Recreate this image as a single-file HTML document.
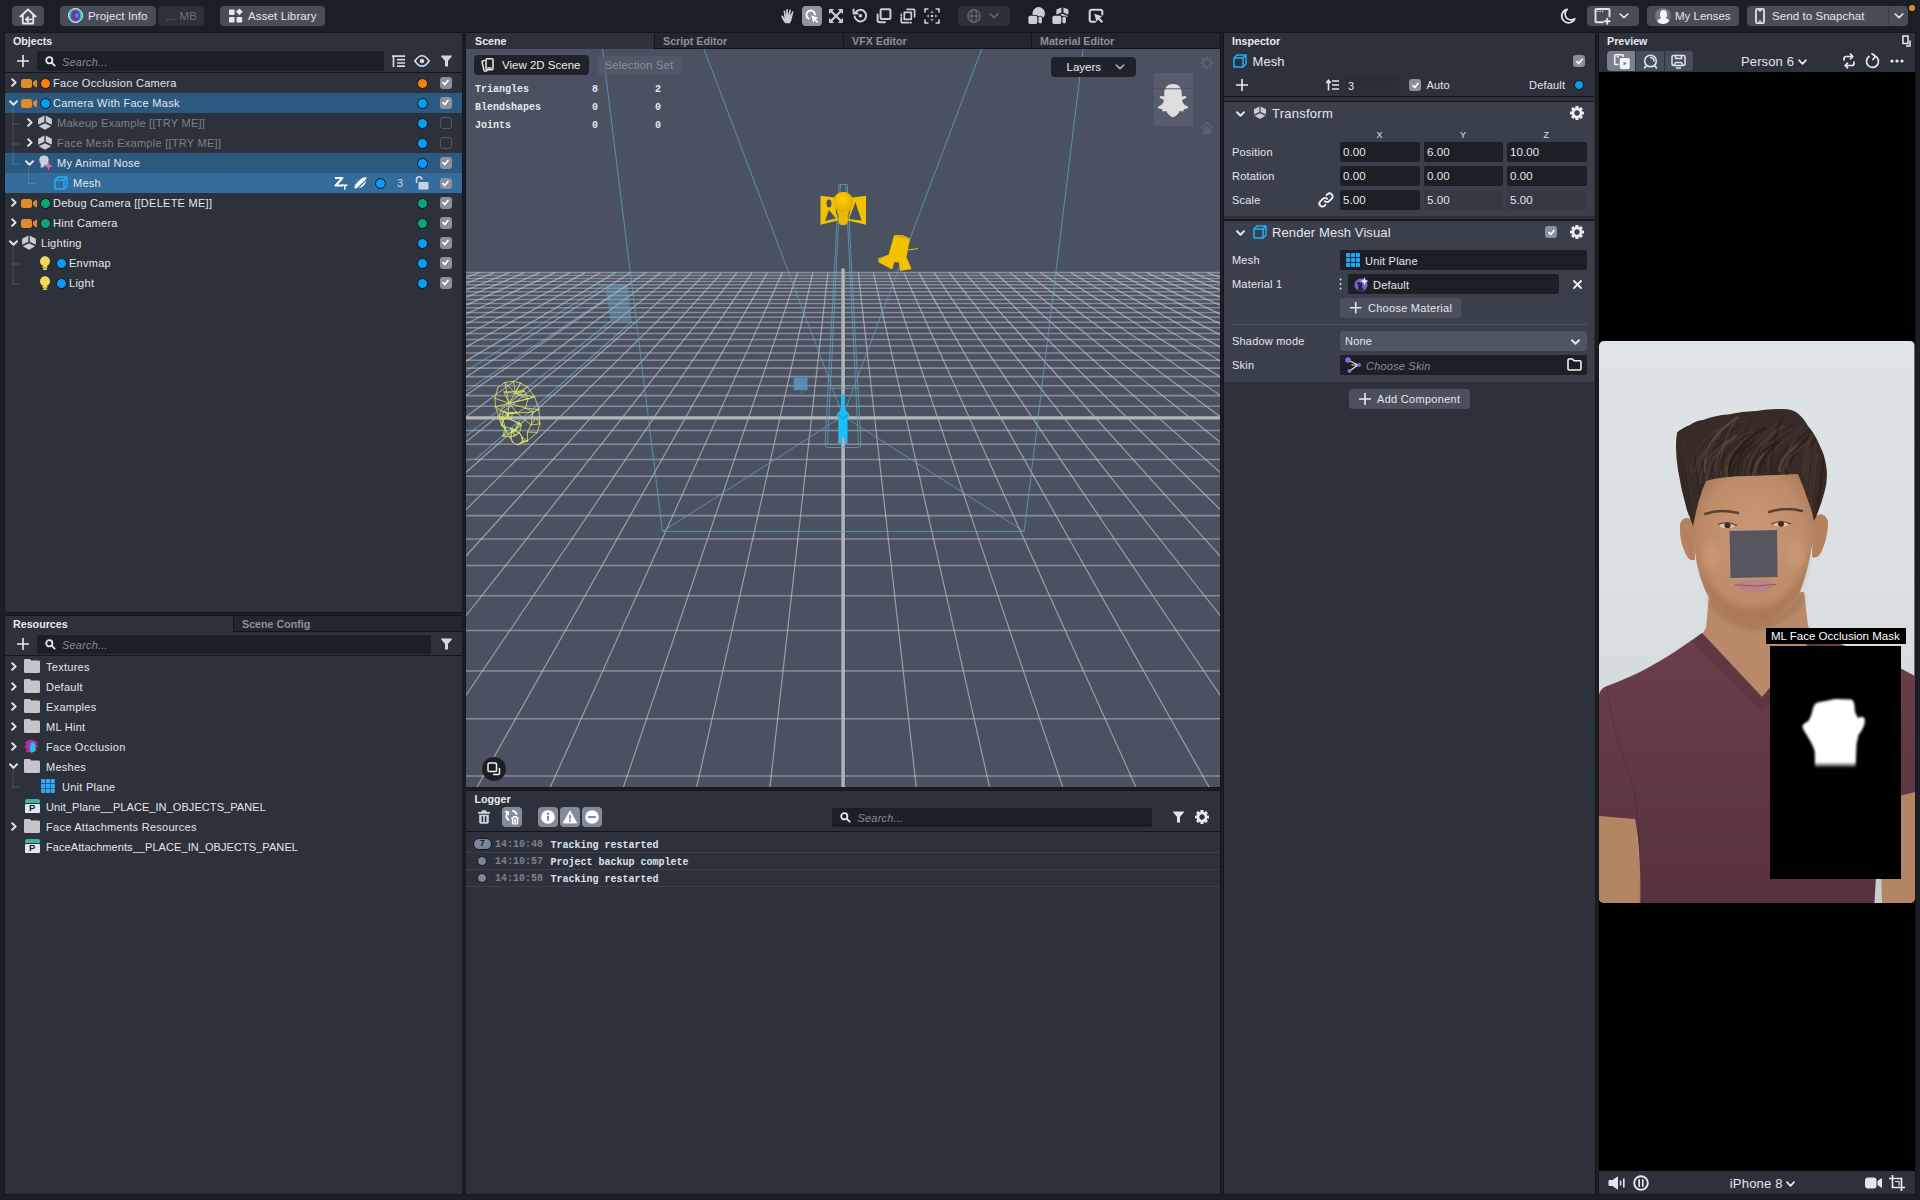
<!DOCTYPE html>
<html><head><meta charset="utf-8"><title>Lens Studio</title>
<style>
*{box-sizing:border-box;margin:0;padding:0}
html,body{width:1920px;height:1200px;overflow:hidden;background:#1b1e24;font-family:"Liberation Sans",sans-serif;font-size:11px;color:#e4e7ec;letter-spacing:.2px}
.abs{position:absolute}
.panel{position:absolute;background:#2d313b;border:1px solid #14161a}
.ptitle{position:absolute;font-weight:bold;font-size:10.700px;color:#e8eaee;letter-spacing:0;white-space:nowrap}
.tab{position:absolute;background:#23262e;border-left:1px solid #14161a;border-bottom:1px solid #14161a;color:#8b919c;font-weight:bold;font-size:10.700px;letter-spacing:0;padding-left:8px;padding-top:1px;line-height:15px;white-space:nowrap}
.btn{position:absolute;background:#474e5a;border-radius:4px;color:#e6e8ec;white-space:nowrap}
.t{position:absolute;white-space:nowrap;line-height:14px}
.dim{color:#7b818c}
.input{position:absolute;background:#1c1f26;border-radius:2px;color:#e4e7ec}
.row{position:absolute;left:0;width:456px;height:20px}
.sel1{background:#2c5980}
.sel2{background:#346c9b}
.dot{position:absolute;width:11px;height:11px;border-radius:50%;border:1px solid #14161a}
.blue{background:#0a9bf5}.orange{background:#f6820c}.green{background:#0fa478}
.cb{position:absolute;width:11.500px;height:11.500px;border-radius:3px;background:#8a919d}
.cb svg{position:absolute;left:1px;top:1px}
.cbo{position:absolute;width:11.500px;height:11.500px;border-radius:3px;border:1.500px solid #545a66}
svg{position:absolute;overflow:visible}
.mono{font-family:"Liberation Mono",monospace;letter-spacing:0}
.it{font-style:italic;color:#858b96}
</style></head><body>
<!-- TOOLBAR -->
<div class="btn" style="left:12px;top:6px;width:32px;height:20px"></div>
<svg style="left:19px;top:7.500px" width="18" height="17" viewBox="0 0 18 17" fill="none" stroke="#dfe5ec" stroke-width="1.900" stroke-linejoin="round" stroke-linecap="round"><path d="M1.500 8.500 9 1.500 16.500 8.500M3.800 7.500V15.500H14.200V7.500"/><path d="M12.200 11.300H7.200M9.200 9 6.900 11.300l2.300 2.300" stroke-width="1.700"/></svg>
<div class="btn" style="left:60px;top:6px;width:96px;height:20px"></div>
<div class="abs" style="left:68px;top:8px;width:15px;height:15px;border-radius:50%;background:#19c3c0;border:1px solid #e8f4f4"></div>
<div class="abs" style="left:71px;top:10px;width:9px;height:11px;border-radius:50% 50% 45% 45%;background:#8a2a96"></div>
<div class="abs" style="left:75px;top:13px;width:4px;height:5px;border-radius:50%;background:#1b9fd0"></div>
<div class="t" style="left:88px;top:9px;font-size:11.500px;letter-spacing:.12px">Project Info</div>
<div class="btn" style="left:158px;top:6px;width:46px;height:20px;background:#2d3139"></div>
<div class="t" style="left:166px;top:9px;font-size:11.5px;color:#6b717c;letter-spacing:.2px">... MB</div>
<div class="btn" style="left:220px;top:6px;width:105px;height:20px"></div>
<svg style="left:228px;top:8px" width="16" height="16" viewBox="0 0 16 16" fill="#e3e8ee"><rect x="1" y="1.5" width="5.6" height="5.6" rx=".8"/><rect x="1" y="9" width="5.6" height="5.6" rx=".8"/><rect x="8.6" y="9" width="5.6" height="5.6" rx=".8"/><path d="M11.4.4 14.8 3.8 11.4 7.2 8 3.8z"/></svg>
<div class="t" style="left:248px;top:9px;font-size:11.500px;letter-spacing:.12px">Asset Library</div>

<!-- center tools -->
<svg style="left:781px;top:8px" width="15" height="16" viewBox="0 0 15 16" fill="#c5d0dc"><path d="M4.2 15.2C2.6 13.4 1.3 11.2.4 8.6c-.3-.9.9-1.5 1.5-.6l1.6 2.3L2.6 3.2c-.1-1 1.2-1.2 1.4-.3l1 4.6L5.3 1.400c0-1 1.400-1 1.500 0l.4 5.900L8.400 1.900c.2-.9 1.500-.7 1.400.3L9.200 8l1.900-4.200c.4-.9 1.600-.4 1.300.5L10.800 10.200c-.3 2-.9 3.600-1.800 5z"/></svg>
<div class="abs" style="left:802px;top:6px;width:20px;height:20px;border-radius:4px;background:#8b95a3"></div>
<svg style="left:804px;top:8px" width="16" height="16" viewBox="0 0 16 16" fill="none"><path d="M4.6 10.500A4.300 4.300 0 1 1 11 6.300" stroke="#fff" stroke-width="1.900" stroke-linecap="round"/><path d="M7.200 7.200 14.300 9.900 11.700 11.300 14.400 14 13.300 15.100 10.600 12.400 9.300 14.800z" fill="#fff"/></svg>
<svg style="left:829px;top:9px" width="14" height="14" viewBox="0 0 14 14" fill="#c5d0dc"><path d="M0 0h5.200L0 5.200zM14 0v5.200L8.800 0zM0 14V8.800L5.200 14zM14 14H8.800L14 8.800z"/><path d="M2 2 12 12M12 2 2 12" stroke="#c5d0dc" stroke-width="2.100" fill="none"/></svg>
<svg style="left:853px;top:8px" width="15" height="15" viewBox="0 0 15 15" fill="none" stroke="#c5d0dc" stroke-width="2"><path d="M2.300 4.800A5.800 5.800 0 1 1 1.600 8.400" stroke-linecap="round"/><path d="M.6 1.500v4h4" fill="none" stroke-linejoin="round" stroke-linecap="round"/><circle cx="7.400" cy="7.700" r="1.800" fill="#c5d0dc" stroke="none"/></svg>
<svg style="left:876px;top:8px" width="16" height="16" viewBox="0 0 16 16" fill="none" stroke="#c5d0dc" stroke-width="2"><rect x="4.600" y="1.200" width="9.800" height="9.800" rx="1"/><path d="M1.600 6.500v5.500a2.300 2.300 0 0 0 2.300 2.300H9" stroke-linecap="round"/></svg>
<svg style="left:900px;top:8px" width="16" height="16" viewBox="0 0 16 16" fill="none" stroke="#c5d0dc" stroke-width="1.700" stroke-linecap="round" stroke-linejoin="round"><rect x="4.300" y="4.300" width="7" height="7"/><path d="M7 1.300h6.600a1 1 0 0 1 1 1V8.800M1.300 9.500v4.200a1 1 0 0 0 1 1H8.800M1.300 7.700V6.300M11 14.700h-.4"/></svg>
<svg style="left:924px;top:8px" width="16" height="16" viewBox="0 0 16 16" fill="none" stroke="#c5d0dc" stroke-width="1.700"><path d="M1 4.500V1h3.500M11.500 1H15v3.500M15 11.500V15h-3.500M4.500 15H1v-3.500"/><circle cx="8" cy="8" r="1.300" fill="#c5d0dc" stroke="none"/><path d="M8 2.500 9.800 5H6.200zM8 13.500 9.800 11H6.200zM2.500 8 5 6.200v3.600zM13.500 8 11 6.200v3.600z" fill="#8f9aa8" stroke="none"/></svg>
<div class="abs" style="left:958px;top:6px;width:52px;height:20px;border-radius:4px;background:#2c3038"></div>
<svg style="left:967px;top:9px" width="14" height="14" viewBox="0 0 14 14" fill="none" stroke="#5f6672" stroke-width="1.400"><circle cx="7" cy="7" r="6.200"/><ellipse cx="7" cy="7" rx="2.600" ry="6.200"/><path d="M.8 7h12.400"/></svg>
<svg style="left:989px;top:13px" width="10" height="6" viewBox="0 0 10 6" fill="none" stroke="#5f6672" stroke-width="1.700" stroke-linecap="round" stroke-linejoin="round"><path d="M1.200 1 5 4.600 8.800 1"/></svg>
<svg style="left:1027.500px;top:7px" width="17" height="17" viewBox="0 0 17 17" fill="#c5d0dc"><circle cx="10.700" cy="6.300" r="6.200"/><rect x="-.3" y="8" width="10.500" height="9.500" rx="2" fill="#1b1e24"/><rect x="9.600" y="8.700" width="5.200" height="9" rx="2.600" fill="#1b1e24"/><rect x=".4" y="8.800" width="8.900" height="8.100" rx="1.700"/><rect x="10.500" y="9.600" width="3.400" height="6.900" rx="1.700"/></svg>
<svg style="left:1051.500px;top:7px" width="17" height="17" viewBox="0 0 17 17" fill="#c5d0dc"><path d="M9.400.4 4.400 2.600V7.800L9.400 5.600zM11.400.4l5 2.200V7.800L11.400 5.600zM10.400 6.700 16.200 9.300 14 10.200 10.400 8.700 8.600 9.400V7.500z"/><rect x="-.3" y="8" width="10.500" height="9.500" rx="2" fill="#1b1e24"/><rect x="9.600" y="8.700" width="5.200" height="9" rx="2.600" fill="#1b1e24"/><rect x=".4" y="8.800" width="8.900" height="8.100" rx="1.700"/><rect x="10.500" y="9.600" width="3.400" height="6.900" rx="1.700"/></svg>
<svg style="left:1088px;top:8px" width="17" height="16" viewBox="0 0 17 16" fill="none"><path d="M7 13.800H3.700a2 2 0 0 1-2-2V3.700a2 2 0 0 1 2-2h8.600a2 2 0 0 1 2 2V6.500" stroke="#cdd7e2" stroke-width="2.100" stroke-linecap="round"/><path d="M6.200 5.700 14.200 8.300 11.700 10 15.200 13.500 13.600 15.100 10.100 11.600 8.600 14z" fill="#cdd7e2"/></svg>

<!-- right side -->
<svg style="left:1561px;top:8px" width="15" height="16" viewBox="0 0 15 16" fill="none" stroke="#dfe5ec" stroke-width="1.700" stroke-linejoin="round"><path d="M6.300 1.300A6.800 6.800 0 1 0 13.800 10.600 5.800 5.800 0 0 1 6.300 1.300z"/></svg>
<div class="btn" style="left:1587px;top:6px;width:52px;height:20px"></div>
<svg style="left:1594px;top:8px" width="18" height="16" viewBox="0 0 18 16" fill="none" stroke="#dfe5ec" stroke-width="1.900" stroke-linecap="round"><path d="M9 14.300H2.500a1 1 0 0 1-1-1V2a1 1 0 0 1 1-1H14.500a1 1 0 0 1 1 1v6.500"/><path d="M3.800 3.300h.01M6.200 3.300h.01M8.600 3.300h.01" stroke-width="1.500"/><path d="M13.200 10.800v5M10.700 13.300h5"/></svg>
<svg style="left:1619px;top:13px" width="10" height="6" viewBox="0 0 10 6" fill="none" stroke="#dfe5ec" stroke-width="1.700" stroke-linecap="round" stroke-linejoin="round"><path d="M1.200 1 5 4.600 8.800 1"/></svg>
<div class="btn" style="left:1647px;top:6px;width:92px;height:20px"></div>
<div class="abs" style="left:1655px;top:8px;width:16px;height:16px;border-radius:50%;background:#6f7682;overflow:hidden"><div class="abs" style="left:4.500px;top:2px;width:7px;height:8.500px;border-radius:50%;background:#f2f4f6"></div><div class="abs" style="left:1.500px;top:10px;width:13px;height:9px;border-radius:50% 50% 0 0;background:#f2f4f6"></div></div>
<div class="t" style="left:1675px;top:9px;font-size:11.500px;letter-spacing:0">My Lenses</div>
<div class="btn" style="left:1747px;top:6px;width:161px;height:20px"></div>
<div class="abs" style="left:1888px;top:6px;width:1px;height:20px;background:#3a404a"></div>
<svg style="left:1755px;top:8px" width="10" height="16" viewBox="0 0 10 16" fill="none" stroke="#dfe5ec" stroke-width="1.800"><rect x="1" y=".8" width="8" height="14.400" rx="1.400"/><path d="M3.500 2.600h3M4 13.200h2" stroke-linecap="round" stroke-width="1.200"/></svg>
<div class="t" style="left:1772px;top:9px;font-size:11.500px;letter-spacing:.07px">Send to Snapchat</div>
<svg style="left:1894px;top:13px" width="10" height="6" viewBox="0 0 10 6" fill="none" stroke="#dfe5ec" stroke-width="1.700" stroke-linecap="round" stroke-linejoin="round"><path d="M1.200 1 5 4.600 8.800 1"/></svg>
<div class="abs" style="left:1909px;top:5px;width:6px;height:6px;border-radius:50%;background:#e08d25"></div>
<div class="panel" style="left:4px;top:32px;width:459px;height:581px">
<div class="ptitle" style="left:8px;top:2px">Objects</div>
<svg style="left:12px;top:22px" width="12" height="12" viewBox="0 0 12 12" fill="none" stroke="#e8ebef" stroke-width="1.600"><path d="M6 0v12M0 6h12"/></svg>
<div class="input" style="left:32px;top:18px;width:347px;height:20px"></div>
<svg style="left:40px;top:23px" width="11" height="11" viewBox="0 0 11 11" fill="none" stroke="#e4e7ec" stroke-width="1.800" stroke-linecap="round"><circle cx="4.300" cy="4.300" r="3.100"/><path d="M6.800 6.800 9.700 9.700"/></svg>
<div class="t it" style="left:57px;top:21.500px;font-size:11px">Search...</div>
<svg style="left:387px;top:22px" width="13" height="12" viewBox="0 0 13 12" fill="none" stroke="#cfd9e4" stroke-width="1.700"><path d="M0 1.200h13M5 4.700h8M5 8h8M5 11.200h8M1.500 1.200v10.800"/></svg>
<svg style="left:409px;top:22px" width="16" height="12" viewBox="0 0 16 12" fill="none" stroke="#cfd9e4" stroke-width="1.700"><path d="M.9 6Q8-4.500 15.100 6 8 16.500.9 6z"/><circle cx="8" cy="6" r="2.300" fill="#cfd9e4" stroke="none"/></svg>
<svg style="left:435.5px;top:22px" width="11" height="12" viewBox="0 0 11 12" fill="#cfd9e4"><path d="M.3.500h10.400q.5.300 0 1L7 6v5.500H4V6L.3 1.500q-.5-.700 0-1z"/></svg>
<div class="abs" style="left:0;top:39px;width:457px;height:1px;background:#14161a"></div>
<div class="row sel1" style="top:60px;width:457px"></div>
<div class="row sel1" style="top:120px;width:457px"></div>
<div class="row sel2" style="top:140px;width:457px"></div>
<div class="abs" style="left:7px;top:75px;width:1.500px;height:56px;background:rgba(255,255,255,.075)"></div>
<div class="abs" style="left:7px;top:90px;width:8px;height:1.500px;background:rgba(255,255,255,.075)"></div>
<div class="abs" style="left:7px;top:110px;width:8px;height:1.500px;background:rgba(255,255,255,.075)"></div>
<div class="abs" style="left:7px;top:130px;width:8px;height:1.500px;background:rgba(255,255,255,.075)"></div>
<div class="abs" style="left:23px;top:134px;width:1px;height:17px;background:rgba(255,255,255,.13)"></div>
<div class="abs" style="left:23px;top:150px;width:8px;height:1px;background:rgba(255,255,255,.13)"></div>
<div class="abs" style="left:7px;top:213px;width:1.500px;height:38px;background:rgba(255,255,255,.075)"></div>
<div class="abs" style="left:7px;top:230px;width:8px;height:1.500px;background:rgba(255,255,255,.075)"></div>
<div class="abs" style="left:7px;top:250px;width:8px;height:1.500px;background:rgba(255,255,255,.075)"></div>
<svg style="left:5.5px;top:44.7px" width="6" height="9" viewBox="0 0 6 9" fill="none" stroke="#dfe3e8" stroke-width="2" stroke-linecap="round" stroke-linejoin="round"><path d="M1.200 1.200 4.600 4.500 1.200 7.800"/></svg>
<div class="abs" style="left:16px;top:45.5px;width:10.500px;height:9px;border-radius:2.500px;background:#e08a2d"></div><svg style="left:27.5px;top:45.5px" width="4" height="9" viewBox="0 0 4 9"><path d="M0 3 3 .8q1-.5 1 .5v6.400q0 1-1 .5L0 6z" fill="#e08a2d"/></svg>
<div class="dot orange" style="left:35px;top:45px"></div>
<div class="t " style="left:48px;top:43px;font-size:11px;letter-spacing:.27px">Face Occlusion Camera</div>
<div class="dot orange" style="left:411.5px;top:44.5px"></div><div class="cb" style="left:435px;top:44.3px"><svg width="9" height="9" viewBox="0 0 9 9" fill="none" stroke="#fff" stroke-width="1.700" stroke-linecap="round" stroke-linejoin="round"><path d="M2 4.700 3.800 6.500 7 2.500"/></svg></div>
<svg style="left:3.8px;top:67px" width="9" height="6" viewBox="0 0 9 6" fill="none" stroke="#dfe3e8" stroke-width="2" stroke-linecap="round" stroke-linejoin="round"><path d="M1 1.200 4.500 4.800 8 1.200"/></svg>
<div class="abs" style="left:16px;top:65.5px;width:10.500px;height:9px;border-radius:2.500px;background:#e08a2d"></div><svg style="left:27.5px;top:65.5px" width="4" height="9" viewBox="0 0 4 9"><path d="M0 3 3 .8q1-.5 1 .5v6.400q0 1-1 .5L0 6z" fill="#e08a2d"/></svg>
<div class="dot blue" style="left:35px;top:65px"></div>
<div class="t " style="left:48px;top:63px;font-size:11px;letter-spacing:.27px">Camera With Face Mask</div>
<div class="dot blue" style="left:411.5px;top:64.5px"></div><div class="cb" style="left:435px;top:64.3px"><svg width="9" height="9" viewBox="0 0 9 9" fill="none" stroke="#fff" stroke-width="1.700" stroke-linecap="round" stroke-linejoin="round"><path d="M2 4.700 3.800 6.500 7 2.500"/></svg></div>
<svg style="left:21.5px;top:84.7px" width="6" height="9" viewBox="0 0 6 9" fill="none" stroke="#dfe3e8" stroke-width="2" stroke-linecap="round" stroke-linejoin="round"><path d="M1.200 1.200 4.600 4.500 1.200 7.800"/></svg>
<svg style="left:32px;top:82.2px" width="16" height="16" viewBox="0 0 14 14" fill="#c9cdd3"><path d="M6.400.5 6.400 6 1 8.600V3.300zM7.600.5 13 3.300v5.300L7.600 6zM7 7.200l5.400 2.600L7 12.900 1.600 9.800z"/></svg>
<div class="t dim" style="left:52px;top:83px;font-size:11px;letter-spacing:.27px">Makeup Example [[TRY ME]]</div>
<div class="dot blue" style="left:411.5px;top:84.5px"></div><div class="cbo" style="left:435px;top:84.3px"></div>
<svg style="left:21.5px;top:104.7px" width="6" height="9" viewBox="0 0 6 9" fill="none" stroke="#dfe3e8" stroke-width="2" stroke-linecap="round" stroke-linejoin="round"><path d="M1.200 1.200 4.600 4.500 1.200 7.800"/></svg>
<svg style="left:32px;top:102.2px" width="16" height="16" viewBox="0 0 14 14" fill="#c9cdd3"><path d="M6.400.5 6.400 6 1 8.600V3.300zM7.600.5 13 3.300v5.300L7.600 6zM7 7.200l5.400 2.600L7 12.900 1.600 9.800z"/></svg>
<div class="t dim" style="left:52px;top:103px;font-size:11px;letter-spacing:.27px">Face Mesh Example [[TRY ME]]</div>
<div class="dot blue" style="left:411.5px;top:104.5px"></div><div class="cbo" style="left:435px;top:104.3px"></div>
<svg style="left:19.8px;top:127px" width="9" height="6" viewBox="0 0 9 6" fill="none" stroke="#dfe3e8" stroke-width="2" stroke-linecap="round" stroke-linejoin="round"><path d="M1 1.200 4.500 4.800 8 1.200"/></svg>
<svg style="left:33px;top:122px" width="16" height="16" viewBox="0 0 16 16"><path d="M2.500 1.500Q6-.5 9.500 1.500 11 3.500 10.500 6l-.5 3Q8 11 6 10.500L5.500 12.500H2.500Q3.500 9 1.500 7 .3 4 2.500 1.500z" fill="#c6d0dc"/><path d="M10.500 6.500 11.700 9.800 15 11 11.700 12.200 10.500 15.500 9.300 12.200 6 11 9.300 9.800z" fill="#e466a8"/></svg>
<div class="t " style="left:52px;top:123px;font-size:11px;letter-spacing:.27px">My Animal Nose</div>
<div class="dot blue" style="left:411.5px;top:124.5px"></div><div class="cb" style="left:435px;top:124.3px"><svg width="9" height="9" viewBox="0 0 9 9" fill="none" stroke="#fff" stroke-width="1.700" stroke-linecap="round" stroke-linejoin="round"><path d="M2 4.700 3.800 6.500 7 2.500"/></svg></div>
<svg style="left:49px;top:143px" width="14" height="14" viewBox="0 0 14 14" fill="none" stroke="#1eb0f5" stroke-width="1.500" stroke-linejoin="round"><rect x="1" y="4" width="9" height="9"/><path d="M1 4 4 1h9v9l-3 3M10 4l3-3"/></svg>
<div class="t " style="left:68px;top:143px;font-size:11px;letter-spacing:.27px">Mesh</div>
<svg style="left:329px;top:144px" width="14" height="13" viewBox="0 0 14 13" fill="none" stroke="#fff" stroke-width="1.900" stroke-linejoin="round"><path d="M1 1h7.500L1.500 8.500H9"/><path d="M8 8.200h5.500M10.800 8.200v4.600" stroke-width="1.500"/></svg>
<svg style="left:349px;top:144px" width="13" height="12" viewBox="0 0 13 12"><path d="M.5 11.500Q.5 1 12.500.3 12.800 11.500 .5 11.500z" fill="#fff"/><path d="M0 8 8.500 -.5M2.500 12.500 13.500 1.500" stroke="#346c9b" stroke-width="1.100"/></svg>
<div class="dot blue" style="left:370px;top:145px"></div>
<div class="t" style="left:392px;top:142.5px;font-size:11px;color:#c9d3de">3</div>
<svg style="left:410px;top:142px" width="14" height="15" viewBox="0 0 14 15"><path d="M1.500 7.500V4.200A2.700 2.700 0 0 1 6.800 4" fill="none" stroke="#c6d2df" stroke-width="1.600" stroke-linecap="round"/><rect x="3.500" y="7" width="10" height="7.500" rx="1.200" fill="#c6d2df"/></svg>
<div class="cb" style="left:435px;top:144.5px"><svg width="9" height="9" viewBox="0 0 9 9" fill="none" stroke="#fff" stroke-width="1.700" stroke-linecap="round" stroke-linejoin="round"><path d="M2 4.700 3.800 6.500 7 2.500"/></svg></div>
<svg style="left:5.5px;top:164.7px" width="6" height="9" viewBox="0 0 6 9" fill="none" stroke="#dfe3e8" stroke-width="2" stroke-linecap="round" stroke-linejoin="round"><path d="M1.200 1.200 4.600 4.500 1.200 7.800"/></svg>
<div class="abs" style="left:16px;top:165.5px;width:10.500px;height:9px;border-radius:2.500px;background:#e08a2d"></div><svg style="left:27.5px;top:165.5px" width="4" height="9" viewBox="0 0 4 9"><path d="M0 3 3 .8q1-.5 1 .5v6.400q0 1-1 .5L0 6z" fill="#e08a2d"/></svg>
<div class="dot green" style="left:35px;top:165px"></div>
<div class="t " style="left:48px;top:163px;font-size:11px;letter-spacing:.27px">Debug Camera [[DELETE ME]]</div>
<div class="dot green" style="left:411.5px;top:164.5px"></div><div class="cb" style="left:435px;top:164.3px"><svg width="9" height="9" viewBox="0 0 9 9" fill="none" stroke="#fff" stroke-width="1.700" stroke-linecap="round" stroke-linejoin="round"><path d="M2 4.700 3.800 6.500 7 2.500"/></svg></div>
<svg style="left:5.5px;top:184.7px" width="6" height="9" viewBox="0 0 6 9" fill="none" stroke="#dfe3e8" stroke-width="2" stroke-linecap="round" stroke-linejoin="round"><path d="M1.200 1.200 4.600 4.500 1.200 7.800"/></svg>
<div class="abs" style="left:16px;top:185.5px;width:10.500px;height:9px;border-radius:2.500px;background:#e08a2d"></div><svg style="left:27.5px;top:185.5px" width="4" height="9" viewBox="0 0 4 9"><path d="M0 3 3 .8q1-.5 1 .5v6.400q0 1-1 .5L0 6z" fill="#e08a2d"/></svg>
<div class="dot green" style="left:35px;top:185px"></div>
<div class="t " style="left:48px;top:183px;font-size:11px;letter-spacing:.27px">Hint Camera</div>
<div class="dot green" style="left:411.5px;top:184.5px"></div><div class="cb" style="left:435px;top:184.3px"><svg width="9" height="9" viewBox="0 0 9 9" fill="none" stroke="#fff" stroke-width="1.700" stroke-linecap="round" stroke-linejoin="round"><path d="M2 4.700 3.800 6.500 7 2.500"/></svg></div>
<svg style="left:3.8px;top:207px" width="9" height="6" viewBox="0 0 9 6" fill="none" stroke="#dfe3e8" stroke-width="2" stroke-linecap="round" stroke-linejoin="round"><path d="M1 1.200 4.500 4.800 8 1.200"/></svg>
<svg style="left:16px;top:202.2px" width="16" height="16" viewBox="0 0 14 14" fill="#c9cdd3"><path d="M6.400.5 6.400 6 1 8.600V3.300zM7.600.5 13 3.300v5.300L7.600 6zM7 7.200l5.400 2.600L7 12.900 1.600 9.800z"/></svg>
<div class="t " style="left:36px;top:203px;font-size:11px;letter-spacing:.27px">Lighting</div>
<div class="dot blue" style="left:411.5px;top:204.5px"></div><div class="cb" style="left:435px;top:204.3px"><svg width="9" height="9" viewBox="0 0 9 9" fill="none" stroke="#fff" stroke-width="1.700" stroke-linecap="round" stroke-linejoin="round"><path d="M2 4.700 3.800 6.500 7 2.500"/></svg></div>
<svg style="left:33.5px;top:222.5px" width="12" height="15" viewBox="0 0 12 15"><circle cx="6" cy="5.300" r="5" fill="#f1da55"/><rect x="3.600" y="9.500" width="4.800" height="2.300" fill="#f1da55"/><rect x="4" y="12.300" width="4" height="1.800" rx=".8" fill="#f1da55"/></svg>
<div class="dot blue" style="left:51px;top:225px"></div>
<div class="t " style="left:64px;top:223px;font-size:11px;letter-spacing:.27px">Envmap</div>
<div class="dot blue" style="left:411.5px;top:224.5px"></div><div class="cb" style="left:435px;top:224.3px"><svg width="9" height="9" viewBox="0 0 9 9" fill="none" stroke="#fff" stroke-width="1.700" stroke-linecap="round" stroke-linejoin="round"><path d="M2 4.700 3.800 6.500 7 2.500"/></svg></div>
<svg style="left:33.5px;top:242.5px" width="12" height="15" viewBox="0 0 12 15"><circle cx="6" cy="5.300" r="5" fill="#f1da55"/><rect x="3.600" y="9.500" width="4.800" height="2.300" fill="#f1da55"/><rect x="4" y="12.300" width="4" height="1.800" rx=".8" fill="#f1da55"/></svg>
<div class="dot blue" style="left:51px;top:245px"></div>
<div class="t " style="left:64px;top:243px;font-size:11px;letter-spacing:.27px">Light</div>
<div class="dot blue" style="left:411.5px;top:244.5px"></div><div class="cb" style="left:435px;top:244.3px"><svg width="9" height="9" viewBox="0 0 9 9" fill="none" stroke="#fff" stroke-width="1.700" stroke-linecap="round" stroke-linejoin="round"><path d="M2 4.700 3.800 6.500 7 2.500"/></svg></div>
</div>
<div class="panel" style="left:4px;top:615px;width:459px;height:580px">
<div class="ptitle" style="left:8px;top:2px">Resources</div>
<div class="tab" style="left:228px;top:0;width:229px;height:16px">Scene Config</div>
<svg style="left:12px;top:22px" width="12" height="12" viewBox="0 0 12 12" fill="none" stroke="#e8ebef" stroke-width="1.600"><path d="M6 0v12M0 6h12"/></svg>
<div class="input" style="left:32px;top:18.500px;width:394px;height:19.500px"></div>
<svg style="left:40px;top:23px" width="11" height="11" viewBox="0 0 11 11" fill="none" stroke="#e4e7ec" stroke-width="1.800" stroke-linecap="round"><circle cx="4.300" cy="4.300" r="3.100"/><path d="M6.800 6.800 9.700 9.700"/></svg>
<div class="t it" style="left:57px;top:21.500px;font-size:11px">Search...</div>
<svg style="left:435.5px;top:22px" width="11" height="12" viewBox="0 0 11 12" fill="#cfd9e4"><path d="M.3.500h10.400q.5.300 0 1L7 6v5.500H4V6L.3 1.500q-.5-.700 0-1z"/></svg>
<div class="abs" style="left:0;top:38.500px;width:457px;height:1px;background:#14161a"></div>
<svg style="left:5.5px;top:45.7px" width="6" height="9" viewBox="0 0 6 9" fill="none" stroke="#dfe3e8" stroke-width="2" stroke-linecap="round" stroke-linejoin="round"><path d="M1.200 1.200 4.600 4.500 1.200 7.800"/></svg>
<svg style="left:19px;top:43.3px" width="16" height="14" viewBox="0 0 16 14" fill="#c3c5ca"><path d="M1.300 0h4.500l1.500 1.600H14.700A1.300 1.300 0 0 1 16 2.900V12.700A1.300 1.300 0 0 1 14.700 14H1.300A1.300 1.300 0 0 1 0 12.700V1.300A1.300 1.300 0 0 1 1.300 0z"/></svg>
<div class="t" style="left:41px;top:44px;font-size:11px;letter-spacing:.27px">Textures</div>
<svg style="left:5.5px;top:65.7px" width="6" height="9" viewBox="0 0 6 9" fill="none" stroke="#dfe3e8" stroke-width="2" stroke-linecap="round" stroke-linejoin="round"><path d="M1.200 1.200 4.600 4.500 1.200 7.800"/></svg>
<svg style="left:19px;top:63.3px" width="16" height="14" viewBox="0 0 16 14" fill="#c3c5ca"><path d="M1.300 0h4.500l1.500 1.600H14.700A1.300 1.300 0 0 1 16 2.900V12.700A1.300 1.300 0 0 1 14.700 14H1.300A1.300 1.300 0 0 1 0 12.700V1.300A1.300 1.300 0 0 1 1.300 0z"/></svg>
<div class="t" style="left:41px;top:64px;font-size:11px;letter-spacing:.27px">Default</div>
<svg style="left:5.5px;top:85.7px" width="6" height="9" viewBox="0 0 6 9" fill="none" stroke="#dfe3e8" stroke-width="2" stroke-linecap="round" stroke-linejoin="round"><path d="M1.200 1.200 4.600 4.500 1.200 7.800"/></svg>
<svg style="left:19px;top:83.3px" width="16" height="14" viewBox="0 0 16 14" fill="#c3c5ca"><path d="M1.300 0h4.500l1.500 1.600H14.700A1.300 1.300 0 0 1 16 2.900V12.700A1.300 1.300 0 0 1 14.700 14H1.300A1.300 1.300 0 0 1 0 12.700V1.300A1.300 1.300 0 0 1 1.300 0z"/></svg>
<div class="t" style="left:41px;top:84px;font-size:11px;letter-spacing:.27px">Examples</div>
<svg style="left:5.5px;top:105.7px" width="6" height="9" viewBox="0 0 6 9" fill="none" stroke="#dfe3e8" stroke-width="2" stroke-linecap="round" stroke-linejoin="round"><path d="M1.200 1.200 4.600 4.500 1.200 7.800"/></svg>
<svg style="left:19px;top:103.3px" width="16" height="14" viewBox="0 0 16 14" fill="#c3c5ca"><path d="M1.300 0h4.500l1.500 1.600H14.700A1.300 1.300 0 0 1 16 2.900V12.700A1.300 1.300 0 0 1 14.700 14H1.300A1.300 1.300 0 0 1 0 12.700V1.300A1.300 1.300 0 0 1 1.300 0z"/></svg>
<div class="t" style="left:41px;top:104px;font-size:11px;letter-spacing:.27px">ML Hint</div>
<svg style="left:5.5px;top:125.7px" width="6" height="9" viewBox="0 0 6 9" fill="none" stroke="#dfe3e8" stroke-width="2" stroke-linecap="round" stroke-linejoin="round"><path d="M1.200 1.200 4.600 4.500 1.200 7.800"/></svg>
<svg style="left:19px;top:123px" width="16" height="16" viewBox="0 0 16 16"><path d="M3 2Q7-.5 11 2l2.500 1-1 2.500 1.500 2-2 1.500.5 3-3 .5L8 15 5.500 13 2 13.500 2.500 10 .3 8 2 6 1 3z" fill="#b0309c"/><path d="M6 13V8.500L4.800 7.200q.2-1 1.200-.3L6.600 7.500V4q.6-1 1.200 0V6.500 3.200q.6-1 1.200 0V6.500 3.800q.6-1 1.200 0V7 5q.6-.8 1.100 0v5.500q0 2-1.500 2.500z" fill="#1bc5e8"/></svg>
<div class="t" style="left:41px;top:124px;font-size:11px;letter-spacing:.27px">Face Occlusion</div>
<svg style="left:3.8px;top:147.3px" width="9" height="6" viewBox="0 0 9 6" fill="none" stroke="#dfe3e8" stroke-width="2" stroke-linecap="round" stroke-linejoin="round"><path d="M1 1.200 4.500 4.800 8 1.200"/></svg>
<svg style="left:19px;top:143.3px" width="16" height="14" viewBox="0 0 16 14" fill="#c3c5ca"><path d="M1.300 0h4.500l1.500 1.600H14.700A1.300 1.300 0 0 1 16 2.900V12.700A1.300 1.300 0 0 1 14.700 14H1.300A1.300 1.300 0 0 1 0 12.700V1.300A1.300 1.300 0 0 1 1.300 0z"/></svg>
<div class="t" style="left:41px;top:144px;font-size:11px;letter-spacing:.27px">Meshes</div>
<svg style="left:35.5px;top:163.2px" width="14" height="14" viewBox="0 0 14 14" fill="#2da8f2"><rect x="0.0" y="0.0" width="4.300" height="4.300" rx=".9"/><rect x="0.0" y="4.8" width="4.300" height="4.300" rx=".9"/><rect x="0.0" y="9.6" width="4.300" height="4.300" rx=".9"/><rect x="4.8" y="0.0" width="4.300" height="4.300" rx=".9"/><rect x="4.8" y="4.8" width="4.300" height="4.300" rx=".9"/><rect x="4.8" y="9.6" width="4.300" height="4.300" rx=".9"/><rect x="9.6" y="0.0" width="4.300" height="4.300" rx=".9"/><rect x="9.6" y="4.8" width="4.300" height="4.300" rx=".9"/><rect x="9.6" y="9.6" width="4.300" height="4.300" rx=".9"/></svg>
<div class="t" style="left:57px;top:164px;font-size:11px;letter-spacing:.27px">Unit Plane</div>
<div class="abs" style="left:19.5px;top:183px;width:15px;height:4px;border-radius:2px 2px 0 0;background:#3db5a0"></div><div class="abs" style="left:19.5px;top:188px;width:15px;height:9px;border-radius:1px;background:#e3e7ec"></div><div class="abs" style="left:24.0px;top:187.2px;font-size:9.500px;font-weight:bold;color:#1b1e24;line-height:10px;letter-spacing:0">P</div>
<div class="t" style="left:41px;top:184px;font-size:11px;letter-spacing:.07px">Unit_Plane__PLACE_IN_OBJECTS_PANEL</div>
<svg style="left:5.5px;top:205.7px" width="6" height="9" viewBox="0 0 6 9" fill="none" stroke="#dfe3e8" stroke-width="2" stroke-linecap="round" stroke-linejoin="round"><path d="M1.200 1.200 4.600 4.500 1.200 7.800"/></svg>
<svg style="left:19px;top:203.3px" width="16" height="14" viewBox="0 0 16 14" fill="#c3c5ca"><path d="M1.300 0h4.500l1.500 1.600H14.700A1.300 1.300 0 0 1 16 2.900V12.700A1.300 1.300 0 0 1 14.700 14H1.300A1.300 1.300 0 0 1 0 12.700V1.300A1.300 1.300 0 0 1 1.300 0z"/></svg>
<div class="t" style="left:41px;top:204px;font-size:11px;letter-spacing:.27px">Face Attachments Resources</div>
<div class="abs" style="left:19.5px;top:223px;width:15px;height:4px;border-radius:2px 2px 0 0;background:#3db5a0"></div><div class="abs" style="left:19.5px;top:228px;width:15px;height:9px;border-radius:1px;background:#e3e7ec"></div><div class="abs" style="left:24.0px;top:227.2px;font-size:9.500px;font-weight:bold;color:#1b1e24;line-height:10px;letter-spacing:0">P</div>
<div class="t" style="left:41px;top:224px;font-size:11px;letter-spacing:.07px">FaceAttachments__PLACE_IN_OBJECTS_PANEL</div>
<div class="abs" style="left:7px;top:151px;width:1.500px;height:20px;background:rgba(255,255,255,.075)"></div>
<div class="abs" style="left:7px;top:170px;width:8px;height:1.500px;background:rgba(255,255,255,.075)"></div>
</div>
<div class="panel" style="left:465px;top:32px;width:756px;height:756px;background:#2d313b">
<div class="ptitle" style="left:9px;top:2px">Scene</div>
<div class="tab" style="left:188px;top:0;width:189px;height:16px">Script Editor</div>
<div class="tab" style="left:377px;top:0;width:188px;height:16px">VFX Editor</div>
<div class="tab" style="left:565px;top:0;width:189px;height:16px">Material Editor</div>
</div>
<svg style="left:466px;top:49px;overflow:hidden" width="754" height="738" viewBox="466 49 754 738">
<rect x="466" y="49" width="754" height="738" fill="#4a5262"/>
<g stroke="#5f9fb8" stroke-width="1.150" fill="none" opacity=".8">
<path d="M605 284.600 466 371M627.800 284.600 466 391M610.400 321.500 466 436M631.900 321.500 475 460"/>
</g>
<path d="M461.0 776.0H1225.0M461.0 718.8H1225.0M461.0 671.0H1225.0M461.0 630.5H1225.0M461.0 595.7H1225.0M461.0 565.5H1225.0M461.0 539.0H1225.0M461.0 515.6H1225.0M461.0 494.8H1225.0M461.0 476.2H1225.0M461.0 459.4H1225.0M461.0 444.2H1225.0M461.0 430.4H1225.0M461.0 417.8H1225.0M461.0 406.2H1225.0M461.0 395.6H1225.0M461.0 385.7H1225.0M461.0 376.6H1225.0M461.0 368.1H1225.0M461.0 360.2H1225.0M461.0 352.9H1225.0M461.0 346.0H1225.0M461.0 339.5H1225.0M461.0 333.4H1225.0M461.0 327.7H1225.0M461.0 322.3H1225.0M461.0 317.2H1225.0M461.0 312.4H1225.0M461.0 307.8H1225.0M461.0 303.5H1225.0M461.0 299.4H1225.0M461.0 295.5H1225.0M461.0 291.7H1225.0M461.0 288.2H1225.0M461.0 284.8H1225.0M461.0 281.5H1225.0M461.0 278.4H1225.0M461.0 275.5H1225.0M463.9 272.6H1222.3" stroke="#c3c7cd" stroke-opacity=".5" stroke-width="1.550" fill="none"/>
<path d="M463.9 272.6L-995.3 790M479.1 272.6L-921.8 790M494.2 272.6L-848.2 790M509.4 272.6L-774.7 790M524.6 272.6L-701.2 790M539.7 272.6L-627.6 790M554.9 272.6L-554.1 790M570.1 272.6L-480.6 790M585.3 272.6L-407.0 790M600.4 272.6L-333.5 790M615.6 272.6L-259.9 790M630.8 272.6L-186.4 790M645.9 272.6L-112.9 790M661.1 272.6L-39.3 790M676.3 272.6L34.2 790M691.4 272.6L107.7 790M706.6 272.6L181.3 790M721.8 272.6L254.8 790M736.9 272.6L328.3 790M752.1 272.6L401.9 790M767.3 272.6L475.4 790M782.4 272.6L549.0 790M797.6 272.6L622.5 790M812.8 272.6L696.0 790M827.9 272.6L769.6 790M858.3 272.6L916.6 790M873.4 272.6L990.2 790M888.6 272.6L1063.7 790M903.8 272.6L1137.2 790M918.9 272.6L1210.8 790M934.1 272.6L1284.3 790M949.3 272.6L1357.9 790M964.4 272.6L1431.4 790M979.6 272.6L1504.9 790M994.8 272.6L1578.5 790M1009.9 272.6L1652.0 790M1025.1 272.6L1725.5 790M1040.3 272.6L1799.1 790M1055.4 272.6L1872.6 790M1070.6 272.6L1946.1 790M1085.8 272.6L2019.7 790M1100.9 272.6L2093.2 790M1116.1 272.6L2166.8 790M1131.3 272.6L2240.3 790M1146.5 272.6L2313.8 790M1161.6 272.6L2387.4 790M1176.8 272.6L2460.9 790M1192.0 272.6L2534.4 790M1207.1 272.6L2608.0 790M1222.3 272.6L2681.5 790" stroke="#c9cdd2" stroke-opacity=".62" stroke-width="1.200" fill="none"/>
<path d="M466 417.900H1220" stroke="#b3b6b9" stroke-width="3.200"/>
<path d="M843.100 268.500V787" stroke="#b3b6b9" stroke-width="3.400"/>
<path d="M605 284.600 627.800 284.600 631.900 321.500 610.400 321.500z" fill="#6eaac6" fill-opacity=".42"/>
<g stroke="#62a3bb" stroke-width="1" fill="none" opacity=".75">
<path d="M843 416L700.6 40M843 416L985.1 40M843 416L662.5 531.5H1024.2L843 416M662.5 531.5L601.4 40M1024.2 531.5L1084.3 40"/>
<path d="M839 184.500H847.200M839 184.500 825 444.500Q825 447.500 828 447.500H858Q861 447.500 861 444.500L847.200 184.500M840.500 184.500 827.500 445M845.700 184.500 858.500 445M827.500 388.300H858.500"/>
</g>
<rect x="793.700" y="377.700" width="13.800" height="12.500" fill="#5a96c8" fill-opacity=".85"/><rect x="801.300" y="391" width="1" height="3" fill="#3d9a55"/>
<path d="M841 395.500Q843 392 845 395.500V409.500L849.600 414.500 847.500 420.500V443.500H844.700V438H841.200V443.500H838.300V420.500L836.700 414.500 841 409.500z" fill="#1cc0f6"/>
<path d="M838.500 414.500 843 419 847.500 414.500" stroke="#169fd0" stroke-width="1.500" fill="none"/>
<defs><radialGradient id="bg1" cx=".45" cy=".4" r=".6"><stop offset="0" stop-color="#ffce00"/><stop offset="1" stop-color="#e3ab00"/></radialGradient></defs>
<path fill-rule="evenodd" d="M820.500 195.800 834.500 197.500 836 212 838 220.500 820.500 224.800zM826.500 203.500a2.500 4 0 1 0 5 0 2.500 4 0 1 0-5 0zM829 210 836 218.500 825 221z" fill="#f2c200"/>
<path fill-rule="evenodd" d="M866 195.800 852.500 197.500 850 212 848 220.500 866 224.800zM855.500 202 861.500 220.500 849 219z" fill="#f2c200"/>
<path d="M835.500 208 838.500 214V221Q838.500 225 843.200 225.300 847.800 225 847.800 221V214L851 208z" fill="#ecb900"/>
<circle cx="843.200" cy="201.800" r="10" fill="url(#bg1)"/>
<path d="M894 235.500Q903 233.500 910 239L906.500 257 911.500 269 900 271 899 262.500 894.500 262 892 269.500 879 262.500 878 260 888.500 255z" fill="#f2c200"/>
<path d="M894 235.500Q903 233.500 910 239 902 240.500 894 235.500z" fill="#e0ae00"/>
<path d="M908 250 918 248.500M878 259 889 255" stroke="#f2c200" stroke-width="1"/>
<clipPath id="whc"><path d="M494.9 398.3 497.8 387.7 504.8 382.4 513.3 381.3 520.4 383.1 527.5 387.0 534.6 396.9 538.9 409.7 539.9 423.9 537.4 432.4 527.5 440.9 517.6 444.8 512.6 442.3 506.3 431.0 499.2 418.2 495.6 406.9z" transform="translate(0 0)"/></clipPath>
<path d="M494.9 398.3L497.8 387.7M497.8 387.7L504.8 382.4M504.8 382.4L513.3 381.3M513.3 381.3L520.4 383.1M520.4 383.1L527.5 387.0M527.5 387.0L534.6 396.9M534.6 396.9L538.9 409.7M538.9 409.7L539.9 423.9M539.9 423.9L537.4 432.4M537.4 432.4L527.5 440.9M527.5 440.9L517.6 444.8M517.6 444.8L512.6 442.3M512.6 442.3L506.3 431.0M506.3 431.0L499.2 418.2M499.2 418.2L495.6 406.9M495.6 406.9L494.9 398.3M509.1 403.3L494.9 398.3M509.1 403.3L504.8 382.4M509.1 403.3L520.4 383.1M509.1 403.3L534.6 396.9M509.1 403.3L495.6 406.9M509.1 403.3L500.5 410.5M509.1 403.3L508.0 414.0M509.1 403.3L517.0 413.0M509.1 403.3L525.5 408.0M509.1 403.3L528.0 399.0M509.1 403.3L524.0 391.0M509.1 403.3L504.0 392.0M515.5 393.4L504.8 382.4M515.5 393.4L513.3 381.3M515.5 393.4L520.4 383.1M515.5 393.4L527.5 387.0M515.5 393.4L534.6 396.9M515.5 393.4L528.0 399.0M515.5 393.4L524.0 391.0M515.5 393.4L504.0 392.0M500.5 410.5L508.0 414.0M508.0 414.0L517.0 413.0M517.0 413.0L525.5 408.0M525.5 408.0L528.0 399.0M528.0 399.0L524.0 391.0M524.0 391.0L504.0 392.0M525.5 408.0L538.9 409.7M525.5 408.0L533.0 412.0M528.0 399.0L534.6 396.9M533.0 412.0L538.9 409.7M533.0 412.0L531.0 425.0M531.0 425.0L539.9 423.9M531.0 425.0L527.5 432.0M527.5 432.0L527.5 440.9M527.5 432.0L537.4 432.4M536.0 418.0L531.0 425.0M536.0 418.0L539.9 423.9M517.0 413.0L533.0 412.0M517.0 413.0L531.0 425.0M500.5 410.5L495.6 406.9M500.5 410.5L499.2 418.2M508.0 414.0L499.2 418.2M511.0 428.4L512.2 429.2M511.0 428.4L512.4 430.8M511.0 428.4L512.0 431.5M511.0 428.4L515.4 430.1M521.3 425.4L519.6 423.0M521.3 425.4L517.9 423.4M521.3 425.4L515.4 430.1M521.3 425.4L519.5 432.9M512.2 429.2L511.0 428.4M512.2 429.2L512.4 430.8M512.2 429.2L512.0 431.5M512.2 429.2L515.4 430.1M505.1 426.9L501.7 425.4M505.1 426.9L506.3 431.0M505.1 426.9L511.0 428.4M505.1 426.9L503.1 420.4M514.9 435.6L510.7 437.1M514.9 435.6L512.0 431.5M514.9 435.6L512.4 430.8M514.9 435.6L519.5 432.9M503.1 420.4L505.2 418.5M503.1 420.4L501.0 417.5M503.1 420.4L499.2 418.2M503.1 420.4L501.7 425.4M503.0 436.1L506.3 431.0M503.0 436.1L510.7 437.1M503.0 436.1L505.1 426.9M503.0 436.1L512.0 431.5M516.3 412.3L517.0 413.0M516.3 412.3L512.6 412.8M516.3 412.3L508.0 414.0M516.3 412.3L507.4 413.2M522.6 440.9L522.9 441.9M522.6 440.9L522.1 437.3M522.6 440.9L527.5 440.9M522.6 440.9L517.6 444.8M515.4 430.1L512.4 430.8M515.4 430.1L512.2 429.2M515.4 430.1L512.0 431.5M515.4 430.1L511.0 428.4M504.5 411.5L507.4 413.2M504.5 411.5L500.5 410.5M504.5 411.5L508.0 414.0M504.5 411.5L501.0 417.5M512.6 412.8L516.3 412.3M512.6 412.8L517.0 413.0M512.6 412.8L508.0 414.0M512.6 412.8L507.4 413.2M505.2 418.5L507.9 418.1M505.2 418.5L503.1 420.4M505.2 418.5L501.0 417.5M505.2 418.5L508.0 414.0M501.7 425.4L505.1 426.9M501.7 425.4L503.1 420.4M501.7 425.4L506.3 431.0M501.7 425.4L499.2 418.2M510.7 437.1L514.9 435.6M510.7 437.1L512.6 442.3M510.7 437.1L512.0 431.5M510.7 437.1L512.4 430.8M512.4 430.8L512.0 431.5M512.4 430.8L512.2 429.2M512.4 430.8L511.0 428.4M512.4 430.8L515.4 430.1M512.0 431.5L512.4 430.8M512.0 431.5L512.2 429.2M512.0 431.5L511.0 428.4M512.0 431.5L515.4 430.1M511.1 419.6L507.9 418.1M511.1 419.6L505.2 418.5M511.1 419.6L508.0 414.0M511.1 419.6L512.6 412.8M522.9 441.9L522.6 440.9M522.9 441.9L527.5 440.9M522.9 441.9L522.1 437.3M522.9 441.9L517.6 444.8M519.5 432.9L515.4 430.1M519.5 432.9L522.1 437.3M519.5 432.9L514.9 435.6M519.5 432.9L512.4 430.8M507.9 418.1L505.2 418.5M507.9 418.1L511.1 419.6M507.9 418.1L508.0 414.0M507.9 418.1L507.4 413.2M507.4 413.2L508.0 414.0M507.4 413.2L504.5 411.5M507.4 413.2L507.9 418.1M507.4 413.2L512.6 412.8M517.9 423.4L519.6 423.0M517.9 423.4L521.3 425.4M517.9 423.4L515.4 430.1M517.9 423.4L511.1 419.6M519.6 423.0L517.9 423.4M519.6 423.0L521.3 425.4M519.6 423.0L515.4 430.1M519.6 423.0L511.1 419.6M522.1 437.3L522.6 440.9M522.1 437.3L522.9 441.9M522.1 437.3L519.5 432.9M522.1 437.3L527.5 440.9M501.0 417.5L499.2 418.2M501.0 417.5L503.1 420.4M501.0 417.5L505.2 418.5M501.0 417.5L507.9 418.1" stroke="#d3e267" stroke-width=".9" fill="none" opacity=".92" stroke-linecap="round"/>
</svg>
<div class="abs" style="left:474px;top:55px;width:115px;height:20px;border-radius:4px;background:#1e222a"></div>
<svg style="left:481px;top:58px" width="13" height="14" viewBox="0 0 13 14" fill="none" stroke="#e6e9ed" stroke-width="1.500"><rect x="5" y=".8" width="7" height="11" rx="1.300"/><path d="M6.800 10h3.400" stroke-linecap="round"/><path d="M3.300 2.500 2 2.800Q.8 3.200 1.100 4.400L3 12.300Q3.400 13.400 4.500 13.100L6 12.700" stroke-linecap="round"/></svg>
<div class="t" style="left:502px;top:58px;font-size:11.500px;letter-spacing:0;color:#eceef1">View 2D Scene</div>
<div class="abs" style="left:597px;top:55.500px;width:85px;height:19px;border-radius:4px;background:#555b69;opacity:.75"></div>
<div class="t" style="left:604.500px;top:58px;font-size:11.500px;letter-spacing:.08px;color:#8a909c">Selection Set</div>
<div class="t mono" style="left:475px;top:83px;font-size:10px;font-weight:bold;color:#e6e8ec">Triangles</div>
<div class="t mono" style="left:592px;top:83px;font-size:10px;font-weight:bold;color:#e6e8ec">8</div>
<div class="t mono" style="left:655px;top:83px;font-size:10px;font-weight:bold;color:#e6e8ec">2</div>
<div class="t mono" style="left:475px;top:101px;font-size:10px;font-weight:bold;color:#e6e8ec">Blendshapes</div>
<div class="t mono" style="left:592px;top:101px;font-size:10px;font-weight:bold;color:#e6e8ec">0</div>
<div class="t mono" style="left:655px;top:101px;font-size:10px;font-weight:bold;color:#e6e8ec">0</div>
<div class="t mono" style="left:475px;top:119px;font-size:10px;font-weight:bold;color:#e6e8ec">Joints</div>
<div class="t mono" style="left:592px;top:119px;font-size:10px;font-weight:bold;color:#e6e8ec">0</div>
<div class="t mono" style="left:655px;top:119px;font-size:10px;font-weight:bold;color:#e6e8ec">0</div>
<div class="abs" style="left:1051px;top:57px;width:85px;height:20px;border-radius:4px;background:#1e222a"></div>
<div class="t" style="left:1066.500px;top:60px;font-size:11.500px;letter-spacing:0;color:#eceef1">Layers</div>
<svg style="left:1115px;top:64px" width="10" height="6" viewBox="0 0 10 6" fill="none" stroke="#aeb4bd" stroke-width="1.600" stroke-linecap="round" stroke-linejoin="round"><path d="M1.200 1 5 4.600 8.800 1"/></svg>
<div class="abs" style="left:1153.500px;top:73px;width:39px;height:52.500px;background:#575d6c"></div>
<div class="abs" style="left:1153.500px;top:88px;width:39px;height:1px;background:#4b5263"></div>
<svg style="left:1157px;top:83px" width="32" height="36" viewBox="0 0 32 36"><path d="M16 1C9.500 1 7.200 6 7.200 10.500V13.500L3.500 13Q2 13.500 3 15L7 17Q6.500 21.500 1 23.800 .3 25 2 25.500L5 26.300 5.800 28.500 9.300 28Q11 32.500 16 34.300 21 32.500 22.700 28L26.200 28.500 27 26.300 30 25.500Q31.700 25 31 23.800 25.500 21.500 25 17L29 15Q30 13.500 28.500 13L24.800 13.500V10.500C24.800 6 22.500 1 16 1z" fill="#dedede"/><path d="M8 5.800H24" stroke="#575d6c" stroke-width="1"/></svg>
<svg style="left:1200px;top:56px" width="14" height="14" viewBox="0 0 14 14" fill="none" stroke="#596070" stroke-width="2.200"><circle cx="7" cy="7" r="4"/><path d="M7 .5v2M7 11.500v2M.5 7h2M11.500 7h2M2.400 2.400l1.400 1.400M10.200 10.200l1.400 1.400M2.400 11.600l1.400-1.400M10.200 3.800l1.400-1.400" stroke-width="1.800"/></svg>
<svg style="left:1200px;top:121px" width="14" height="14" viewBox="0 0 14 14"><path d="M1 7 7 1.500 13 7" fill="none" stroke="#596070" stroke-width="1.800"/><path d="M3 8 7 4.500 11 8v5.500H3z" fill="#596070"/></svg>
<div class="abs" style="left:482px;top:757px;width:24px;height:24px;border-radius:50%;background:#1b1e24"></div>
<svg style="left:487px;top:762px" width="14" height="14" viewBox="0 0 14 14" fill="none" stroke="#eef0f3" stroke-width="1.500"><rect x="1" y="1" width="8.500" height="8.500" rx="1.300"/><path d="M12.500 6.500v4.700a1.300 1.300 0 0 1-1.300 1.300H6.500" stroke-linecap="round"/></svg>
<div class="panel" style="left:465px;top:790px;width:756px;height:405px">
<div class="ptitle" style="left:8.500px;top:1.500px">Logger</div>
</div>
<svg style="left:478px;top:809.500px" width="12" height="14" viewBox="0 0 12 14" fill="#c9d6e3"><rect x="0" y="2" width="12" height="1.800" rx=".5"/><rect x="3.500" y=".3" width="5" height="2.500" rx=".8"/><path d="M1.200 4.800H10.800V12.300A1.400 1.400 0 0 1 9.400 13.700H2.600A1.400 1.400 0 0 1 1.200 12.300zM3.600 6.300V12H5.200V6.300zM6.800 6.300V12H8.400V6.300z" fill-rule="evenodd"/></svg>
<div class="abs" style="left:502px;top:807px;width:20px;height:20px;border-radius:4px;background:#828d9c"></div>
<svg style="left:504px;top:809px" width="16" height="16" viewBox="0 0 16 16" fill="none" stroke="#fff" stroke-width="1.900" stroke-linecap="round"><path d="M4.500 11A5.200 5.200 0 0 1 4 3M9 1.800A5.200 5.200 0 0 1 12.500 5M4 3 1.800 2.600M4 3 4.300 5.400"/><path d="M7.500 9h7M9.500 8.800V7.500h3v1.300M8.400 9.300v4.500a1 1 0 0 0 1 1h3.200a1 1 0 0 0 1-1V9.300M10.200 10.800v2.500M11.800 10.800v2.500" stroke-width="1.200"/></svg>
<div class="abs" style="left:538px;top:807px;width:20px;height:20px;border-radius:4px;background:#828d9c"></div>
<div class="abs" style="left:560px;top:807px;width:20px;height:20px;border-radius:4px;background:#828d9c"></div>
<div class="abs" style="left:582px;top:807px;width:20px;height:20px;border-radius:4px;background:#828d9c"></div>
<svg style="left:541px;top:810px" width="14" height="14" viewBox="0 0 14 14"><circle cx="7" cy="7" r="6.800" fill="#fff"/><rect x="6" y="5.800" width="2" height="5" fill="#828d9c"/><circle cx="7" cy="3.700" r="1.200" fill="#828d9c"/></svg>
<svg style="left:563px;top:810px" width="14" height="14" viewBox="0 0 14 14"><path d="M7 .8 13.800 13H.2z" fill="#fff" stroke="#fff" stroke-width=".8" stroke-linejoin="round"/><rect x="6.100" y="4.800" width="1.800" height="4.500" fill="#828d9c"/><circle cx="7" cy="11" r="1" fill="#828d9c"/></svg>
<svg style="left:585px;top:810px" width="14" height="14" viewBox="0 0 14 14"><circle cx="7" cy="7" r="6.800" fill="#fff"/><rect x="3" y="5.900" width="8" height="2.200" rx=".5" fill="#828d9c"/></svg>
<div class="input" style="left:832px;top:807.500px;width:320px;height:19.500px"></div>
<svg style="left:840px;top:812px" width="11" height="11" viewBox="0 0 11 11" fill="none" stroke="#e4e7ec" stroke-width="1.800" stroke-linecap="round"><circle cx="4.300" cy="4.300" r="3.100"/><path d="M6.800 6.800 9.700 9.700"/></svg>
<div class="t it" style="left:857.500px;top:810.500px;font-size:11px">Search...</div>
<svg style="left:1172.5px;top:811px" width="11" height="12" viewBox="0 0 11 12" fill="#dfe5ec"><path d="M.3.500h10.400q.5.300 0 1L7 6v5.500H4V6L.3 1.500q-.5-.700 0-1z"/></svg>
<svg style="left:1195px;top:810px" width="14" height="14" viewBox="-7 -7 14 14"><g fill="#e8ebef"><rect x="-1.600" y="-7" width="3.200" height="4" rx=".6" transform="rotate(0)"/><rect x="-1.600" y="-7" width="3.200" height="4" rx=".6" transform="rotate(45)"/><rect x="-1.600" y="-7" width="3.200" height="4" rx=".6" transform="rotate(90)"/><rect x="-1.600" y="-7" width="3.200" height="4" rx=".6" transform="rotate(135)"/><rect x="-1.600" y="-7" width="3.200" height="4" rx=".6" transform="rotate(180)"/><rect x="-1.600" y="-7" width="3.200" height="4" rx=".6" transform="rotate(225)"/><rect x="-1.600" y="-7" width="3.200" height="4" rx=".6" transform="rotate(270)"/><rect x="-1.600" y="-7" width="3.200" height="4" rx=".6" transform="rotate(315)"/></g><circle r="4" fill="none" stroke="#e8ebef" stroke-width="2.600"/></svg>
<div class="abs" style="left:466px;top:830.700px;width:754px;height:1.300px;background:#14161a"></div>
<div class="abs" style="left:466px;top:851.8px;width:754px;height:1px;background:#3a3f49"></div>
<div class="abs" style="left:472.500px;top:838.0px;width:19.500px;height:12px;border-radius:6px;background:#7a8799;border:1px solid #14161a"></div>
<div class="t mono" style="left:479.800px;top:837.0px;font-size:8.500px;font-weight:bold;color:#1b1e24">7</div>
<div class="t mono" style="left:495px;top:837.5px;font-size:10px;font-weight:bold;color:#78838f">14:10:48</div>
<div class="t mono" style="left:550.500px;top:838.8px;font-size:10px;font-weight:bold;color:#dce4ec">Tracking restarted</div>
<div class="abs" style="left:466px;top:868.9px;width:754px;height:1px;background:#3a3f49"></div>
<div class="abs" style="left:476.700px;top:855.6px;width:10.700px;height:10.700px;border-radius:50%;background:#7a8799;border:1px solid #14161a"></div>
<div class="t mono" style="left:495px;top:854.6px;font-size:10px;font-weight:bold;color:#78838f">14:10:57</div>
<div class="t mono" style="left:550.500px;top:855.9px;font-size:10px;font-weight:bold;color:#dce4ec">Project backup complete</div>
<div class="abs" style="left:466px;top:886.0px;width:754px;height:1px;background:#3a3f49"></div>
<div class="abs" style="left:476.700px;top:872.7px;width:10.700px;height:10.700px;border-radius:50%;background:#7a8799;border:1px solid #14161a"></div>
<div class="t mono" style="left:495px;top:871.7px;font-size:10px;font-weight:bold;color:#78838f">14:10:58</div>
<div class="t mono" style="left:550.500px;top:873.0px;font-size:10px;font-weight:bold;color:#dce4ec">Tracking restarted</div>
<div class="panel" style="left:1223px;top:32px;width:372.500px;height:1163px"></div>
<div class="ptitle" style="left:1232px;top:34.500px">Inspector</div>
<svg style="left:1232.5px;top:54px" width="14" height="14" viewBox="0 0 14 14" fill="none" stroke="#1eb0f5" stroke-width="1.500" stroke-linejoin="round"><rect x="1" y="4" width="9" height="9"/><path d="M1 4 4 1h9v9l-3 3M10 4l3-3"/></svg>
<div class="t" style="left:1252.500px;top:53.500px;font-size:13px;line-height:16px;letter-spacing:.1px">Mesh</div>
<div class="cb" style="left:1573px;top:55px;width:12px;height:12px"><svg style="left:1.500px;top:1.500px" width="9" height="9" viewBox="0 0 9 9" fill="none" stroke="#fff" stroke-width="1.700" stroke-linecap="round" stroke-linejoin="round"><path d="M2 4.700 3.800 6.500 7 2.500"/></svg></div>
<svg style="left:1236px;top:79px" width="12" height="12" viewBox="0 0 12 12" fill="none" stroke="#e8ebef" stroke-width="1.600"><path d="M6 0v12M0 6h12"/></svg>
<svg style="left:1326px;top:79px" width="13" height="12" viewBox="0 0 13 12" fill="none" stroke="#dfe5ec" stroke-width="1.600"><path d="M6 2h7M6 6h7M6 10h7M2.500 11.500V1.500M.3 4 2.500 1.200 4.700 4" stroke-linejoin="round"/></svg>
<div class="input" style="left:1344.500px;top:75.500px;width:54.500px;height:19px;background:#2a2e37"></div>
<div class="t" style="left:1348px;top:79px;font-size:11px">3</div>
<div class="cb" style="left:1409px;top:79px;width:12px;height:12px"><svg style="left:1.500px;top:1.500px" width="9" height="9" viewBox="0 0 9 9" fill="none" stroke="#fff" stroke-width="1.700" stroke-linecap="round" stroke-linejoin="round"><path d="M2 4.700 3.800 6.500 7 2.500"/></svg></div>
<div class="t" style="left:1426.500px;top:78px;font-size:11px">Auto</div>
<div class="t" style="left:1529px;top:78px;font-size:11px">Default</div>
<div class="dot blue" style="left:1573.500px;top:79.500px;width:10.500px;height:10.500px"></div>
<div class="abs" style="left:1224px;top:96px;width:370px;height:1px;background:#14161a"></div>
<div class="abs" style="left:1224px;top:101px;width:370px;height:1px;background:#14161a"></div>
<div class="abs" style="left:1224px;top:102px;width:370px;height:114px;background:#3a404b"></div>
<svg style="left:1236px;top:110.5px" width="9" height="6.0" viewBox="0 0 9 6" fill="none" stroke="#dfe3e8" stroke-width="2" stroke-linecap="round" stroke-linejoin="round"><path d="M1 1.200 4.500 4.800 8 1.200"/></svg>
<svg style="left:1253px;top:106px" width="14" height="14" viewBox="0 0 14 14" fill="#c9cdd3"><path d="M6.400.5 6.400 6 1 8.600V3.300zM7.600.5 13 3.300v5.300L7.600 6zM7 7.200l5.400 2.600L7 12.900 1.600 9.800z"/></svg>
<div class="t" style="left:1272px;top:105.700px;font-size:13px;line-height:16px;letter-spacing:.25px">Transform</div>
<svg style="left:1570px;top:106px" width="14" height="14" viewBox="-7 -7 14 14"><g fill="#e8ebef"><rect x="-1.600" y="-7" width="3.200" height="4" rx=".6" transform="rotate(0)"/><rect x="-1.600" y="-7" width="3.200" height="4" rx=".6" transform="rotate(45)"/><rect x="-1.600" y="-7" width="3.200" height="4" rx=".6" transform="rotate(90)"/><rect x="-1.600" y="-7" width="3.200" height="4" rx=".6" transform="rotate(135)"/><rect x="-1.600" y="-7" width="3.200" height="4" rx=".6" transform="rotate(180)"/><rect x="-1.600" y="-7" width="3.200" height="4" rx=".6" transform="rotate(225)"/><rect x="-1.600" y="-7" width="3.200" height="4" rx=".6" transform="rotate(270)"/><rect x="-1.600" y="-7" width="3.200" height="4" rx=".6" transform="rotate(315)"/></g><circle r="4" fill="none" stroke="#e8ebef" stroke-width="2.600"/></svg>
<div class="t" style="left:1376.5px;top:128px;font-size:9px;color:#dfe3e8">X</div>
<div class="t" style="left:1460px;top:128px;font-size:9px;color:#dfe3e8">Y</div>
<div class="t" style="left:1543.5px;top:128px;font-size:9px;color:#dfe3e8">Z</div>
<div class="t" style="left:1232px;top:145px;font-size:11px">Position</div>
<div class="input" style="left:1340px;top:142px;width:80px;height:19.700px;background:#1c1f26"></div>
<div class="t" style="left:1343px;top:145.3px;font-size:11.500px;letter-spacing:.1px">0.00</div>
<div class="input" style="left:1424px;top:142px;width:79px;height:19.700px;background:#1c1f26"></div>
<div class="t" style="left:1427px;top:145.3px;font-size:11.500px;letter-spacing:.1px">6.00</div>
<div class="input" style="left:1507px;top:142px;width:80px;height:19.700px;background:#1c1f26"></div>
<div class="t" style="left:1510px;top:145.3px;font-size:11.500px;letter-spacing:.1px">10.00</div>
<div class="t" style="left:1232px;top:169px;font-size:11px">Rotation</div>
<div class="input" style="left:1340px;top:166px;width:80px;height:19.700px;background:#1c1f26"></div>
<div class="t" style="left:1343px;top:169.3px;font-size:11.500px;letter-spacing:.1px">0.00</div>
<div class="input" style="left:1424px;top:166px;width:79px;height:19.700px;background:#1c1f26"></div>
<div class="t" style="left:1427px;top:169.3px;font-size:11.500px;letter-spacing:.1px">0.00</div>
<div class="input" style="left:1507px;top:166px;width:80px;height:19.700px;background:#1c1f26"></div>
<div class="t" style="left:1510px;top:169.3px;font-size:11.500px;letter-spacing:.1px">0.00</div>
<div class="t" style="left:1232px;top:193px;font-size:11px">Scale</div>
<div class="input" style="left:1340px;top:190px;width:80px;height:19.700px;background:#1c1f26"></div>
<div class="t" style="left:1343px;top:193.3px;font-size:11.500px;letter-spacing:.1px">5.00</div>
<div class="input" style="left:1424px;top:190px;width:79px;height:19.700px;background:#343944"></div>
<div class="t" style="left:1427px;top:193.3px;font-size:11.500px;letter-spacing:.1px">5.00</div>
<div class="input" style="left:1507px;top:190px;width:80px;height:19.700px;background:#343944"></div>
<div class="t" style="left:1510px;top:193.3px;font-size:11.500px;letter-spacing:.1px">5.00</div>
<svg style="left:1318px;top:192px" width="16" height="16" viewBox="0 0 16 16" fill="none" stroke="#f0f2f4" stroke-width="1.900" stroke-linecap="round"><path d="M6.800 9.200a3 3 0 0 0 4.300 0l2.600-2.600a3 3 0 0 0-4.300-4.300L8.500 3.200"/><path d="M9.200 6.800a3 3 0 0 0-4.300 0L2.300 9.400a3 3 0 0 0 4.300 4.300l.9-.9"/></svg>
<div class="abs" style="left:1224px;top:219px;width:370px;height:1.500px;background:#14161a"></div>
<div class="abs" style="left:1224px;top:220.500px;width:370px;height:161px;background:#3a404b"></div>
<svg style="left:1236px;top:229.5px" width="9" height="6.0" viewBox="0 0 9 6" fill="none" stroke="#dfe3e8" stroke-width="2" stroke-linecap="round" stroke-linejoin="round"><path d="M1 1.200 4.500 4.800 8 1.200"/></svg>
<svg style="left:1253px;top:225px" width="14" height="14" viewBox="0 0 14 14" fill="none" stroke="#1eb0f5" stroke-width="1.500" stroke-linejoin="round"><rect x="1" y="4" width="9" height="9"/><path d="M1 4 4 1h9v9l-3 3M10 4l3-3"/></svg>
<div class="t" style="left:1272px;top:224.700px;font-size:13px;line-height:16px;letter-spacing:.1px">Render Mesh Visual</div>
<div class="cb" style="left:1545px;top:226px;width:12px;height:12px"><svg style="left:1.500px;top:1.500px" width="9" height="9" viewBox="0 0 9 9" fill="none" stroke="#fff" stroke-width="1.700" stroke-linecap="round" stroke-linejoin="round"><path d="M2 4.700 3.800 6.500 7 2.500"/></svg></div>
<svg style="left:1570px;top:225px" width="14" height="14" viewBox="-7 -7 14 14"><g fill="#e8ebef"><rect x="-1.600" y="-7" width="3.200" height="4" rx=".6" transform="rotate(0)"/><rect x="-1.600" y="-7" width="3.200" height="4" rx=".6" transform="rotate(45)"/><rect x="-1.600" y="-7" width="3.200" height="4" rx=".6" transform="rotate(90)"/><rect x="-1.600" y="-7" width="3.200" height="4" rx=".6" transform="rotate(135)"/><rect x="-1.600" y="-7" width="3.200" height="4" rx=".6" transform="rotate(180)"/><rect x="-1.600" y="-7" width="3.200" height="4" rx=".6" transform="rotate(225)"/><rect x="-1.600" y="-7" width="3.200" height="4" rx=".6" transform="rotate(270)"/><rect x="-1.600" y="-7" width="3.200" height="4" rx=".6" transform="rotate(315)"/></g><circle r="4" fill="none" stroke="#e8ebef" stroke-width="2.600"/></svg>
<div class="t" style="left:1232px;top:253px;font-size:11px">Mesh</div>
<div class="input" style="left:1340px;top:250px;width:247px;height:20px"></div>
<svg style="left:1346px;top:253px" width="14" height="14" viewBox="0 0 14 14" fill="#23a7f2"><rect x="0.0" y="0.0" width="4.200" height="4.200" rx=".8"/><rect x="0.0" y="4.9" width="4.200" height="4.200" rx=".8"/><rect x="0.0" y="9.8" width="4.200" height="4.200" rx=".8"/><rect x="4.9" y="0.0" width="4.200" height="4.200" rx=".8"/><rect x="4.9" y="4.9" width="4.200" height="4.200" rx=".8"/><rect x="4.9" y="9.8" width="4.200" height="4.200" rx=".8"/><rect x="9.8" y="0.0" width="4.200" height="4.200" rx=".8"/><rect x="9.8" y="4.9" width="4.200" height="4.200" rx=".8"/><rect x="9.8" y="9.8" width="4.200" height="4.200" rx=".8"/></svg>
<div class="t" style="left:1365px;top:254px;font-size:11px">Unit Plane</div>
<div class="t" style="left:1232px;top:277px;font-size:11px">Material 1</div>
<svg style="left:1338.500px;top:278px" width="3" height="12" viewBox="0 0 3 12" fill="#dfe3e8"><circle cx="1.500" cy="1.500" r="1"/><circle cx="1.500" cy="6" r="1"/><circle cx="1.500" cy="10.500" r="1"/></svg>
<div class="input" style="left:1348px;top:274px;width:211px;height:20px"></div>
<svg style="left:1354px;top:276.500px" width="15" height="15" viewBox="0 0 15 15"><circle cx="7" cy="8" r="6.500" fill="#7e63d8"/><path d="M2.500 6Q6 3.500 8.500 7 7 10.500 10.500 12.500 7 15.500 3.500 13 5.500 9 2.500 6z" fill="#2a2440"/><path d="M10.500 0 11.600 3 14.600 4.100 11.600 5.200 10.500 8.200 9.400 5.200 6.400 4.100 9.400 3z" fill="#f0ecff"/></svg>
<div class="t" style="left:1373px;top:278px;font-size:11px">Default</div>
<svg style="left:1572.500px;top:280px" width="9" height="9" viewBox="0 0 9 9" stroke="#f0f2f4" stroke-width="1.800" stroke-linecap="round"><path d="M1 1 8 8M8 1 1 8"/></svg>
<div class="btn" style="left:1340px;top:298px;width:121px;height:20px;background:#4a515d"></div>
<svg style="left:1350px;top:302px" width="11.5" height="11.5" viewBox="0 0 12 12" fill="none" stroke="#e8ebef" stroke-width="1.600"><path d="M6 0v12M0 6h12"/></svg>
<div class="t" style="left:1368px;top:301px;font-size:11px;letter-spacing:.27px">Choose Material</div>
<div class="abs" style="left:1232px;top:324px;width:356px;height:1px;background:#4c515c"></div>
<div class="t" style="left:1232px;top:334px;font-size:11px">Shadow mode</div>
<div class="abs" style="left:1340px;top:331px;width:247px;height:20px;border-radius:4px;background:#4f5662"></div>
<div class="t" style="left:1345px;top:334px;font-size:11px">None</div>
<svg style="left:1570.5px;top:338.5px" width="9" height="6.0" viewBox="0 0 9 6" fill="none" stroke="#dfe3e8" stroke-width="2" stroke-linecap="round" stroke-linejoin="round"><path d="M1 1.200 4.500 4.800 8 1.200"/></svg>
<div class="t" style="left:1232px;top:357.700px;font-size:11px">Skin</div>
<div class="input" style="left:1340px;top:355px;width:247px;height:19.500px"></div>
<svg style="left:1345px;top:356.500px" width="17" height="17" viewBox="0 0 17 17"><path d="M3 3 13 8 4.500 14M6.500 8H13" stroke="#e4e6ea" stroke-width="1.200" fill="none"/><circle cx="3" cy="3" r="2.700" fill="#8a67dd"/><circle cx="14" cy="8" r="2" fill="#8a67dd"/><circle cx="4.500" cy="14" r="2" fill="#8a67dd"/></svg>
<div class="t it" style="left:1366px;top:358.500px;font-size:11px">Choose Skin</div>
<svg style="left:1566.500px;top:358px" width="15" height="13" viewBox="0 0 15 13" fill="none" stroke="#f0f2f4" stroke-width="1.600" stroke-linejoin="round"><path d="M1 2.200A1.200 1.200 0 0 1 2.200 1H5.500L7 2.800H12.800A1.200 1.200 0 0 1 14 4V10.800A1.200 1.200 0 0 1 12.800 12H2.200A1.200 1.200 0 0 1 1 10.800z"/></svg>
<div class="btn" style="left:1349px;top:389px;width:121px;height:20px;background:#4a515d"></div>
<svg style="left:1359px;top:393px" width="12" height="12" viewBox="0 0 12 12" fill="none" stroke="#e8ebef" stroke-width="1.600"><path d="M6 0v12M0 6h12"/></svg>
<div class="t" style="left:1377px;top:392px;font-size:11px;letter-spacing:.3px">Add Component</div>
<div class="panel" style="left:1598px;top:32px;width:318px;height:1163px"></div>
<div class="ptitle" style="left:1607px;top:34.500px">Preview</div>
<svg style="left:1902px;top:35px" width="11" height="12" viewBox="0 0 11 12" fill="none" stroke="#e8ebef" stroke-width="1.500"><rect x="1" y="1" width="5" height="7.500"/><path d="M8 5.500v5.500H4" /></svg>
<div class="abs" style="left:1607px;top:51px;width:86px;height:19.500px;border-radius:4px;background:#474e5a"></div>
<div class="abs" style="left:1607px;top:51px;width:28px;height:19.500px;border-radius:4px 0 0 4px;background:#79818e"></div>
<div class="abs" style="left:1635px;top:51px;width:1px;height:19.500px;background:#2d313b"></div>
<div class="abs" style="left:1664px;top:51px;width:1px;height:19.500px;background:#2d313b"></div>
<svg style="left:1613.500px;top:53.500px" width="16" height="15" viewBox="0 0 16 15" fill="none" stroke="#f2f4f6" stroke-width="1.500"><path d="M4.500 10.500H1.500a.8.800 0 0 1-.8-.8V1.500a.8.800 0 0 1 .8-.8H8.500a.8.800 0 0 1 .8.800V3"/><path d="M2.700 2.800h2" /><rect x="6.500" y="4.800" width="8.500" height="9.500" rx="1" fill="#f2f4f6"/><path d="M9.500 7.500v4l3.200-2z" fill="#79818e" stroke="none"/></svg>
<svg style="left:1642.500px;top:53.500px" width="15" height="15" viewBox="0 0 15 15" fill="none" stroke="#dfe5ec" stroke-width="1.600" stroke-linecap="round"><circle cx="7.500" cy="7" r="5.800"/><path d="M7.500 3.500A3.500 3.500 0 0 1 11 7M3 12 1.500 14M12 12l1.500 2"/></svg>
<svg style="left:1671px;top:53.500px" width="15" height="15" viewBox="0 0 15 15" fill="none" stroke="#dfe5ec" stroke-width="1.500" stroke-linejoin="round"><rect x="1" y="1.500" width="13" height="10" rx="1.500"/><path d="M4.500 1.500v3h6v-3M3 11.500 4.500 8.500h6l1.500 3M5 14h5"/></svg>
<div class="t" style="left:1741px;top:53.600px;font-size:13px;line-height:16px;letter-spacing:.12px">Person 6</div>
<svg style="left:1797.5px;top:58.5px" width="9" height="6.0" viewBox="0 0 9 6" fill="none" stroke="#e8ebef" stroke-width="1.700" stroke-linecap="round" stroke-linejoin="round"><path d="M1 1.200 4.500 4.800 8 1.200"/></svg>
<svg style="left:1841px;top:53px" width="16" height="16" viewBox="0 0 16 16" fill="none" stroke="#e8ebef" stroke-width="1.700" stroke-linecap="round" stroke-linejoin="round"><path d="M3 7V5.500a2 2 0 0 1 2-2h6.500M9.500 1.200l2.300 2.300-2.300 2.300M13 9v1.500a2 2 0 0 1-2 2H4.500M6.500 14.800l-2.300-2.300 2.300-2.300"/></svg>
<svg style="left:1865px;top:53px" width="15" height="16" viewBox="0 0 15 16" fill="none" stroke="#e8ebef" stroke-width="1.700" stroke-linecap="round" stroke-linejoin="round"><path d="M10.500 3.200A6 6 0 1 1 4 3.500M7 .8l3.500 2.400L8 6.500"/></svg>
<svg style="left:1890px;top:59px" width="14" height="4" viewBox="0 0 14 4" fill="#e8ebef"><circle cx="2" cy="2" r="1.600"/><circle cx="7" cy="2" r="1.600"/><circle cx="12" cy="2" r="1.600"/></svg>
<div class="abs" style="left:1599px;top:72px;width:316px;height:1099px;background:#000"></div>
<svg style="left:1599px;top:341px;overflow:hidden;border-radius:5px" width="315.5" height="562" viewBox="1599 341 315.5 562">
<defs><linearGradient id="pbg" x1="0" y1="0" x2="0" y2="1"><stop offset="0" stop-color="#dfe5e6"/><stop offset=".5" stop-color="#d9dfe1"/><stop offset="1" stop-color="#c9cdce"/></linearGradient><linearGradient id="shirt" x1="0" y1="0" x2="0" y2="1"><stop offset="0" stop-color="#6a3e4b"/><stop offset="1" stop-color="#58323f"/></linearGradient><radialGradient id="skin" cx=".5" cy=".45" r=".6"><stop offset="0" stop-color="#c99978"/><stop offset=".7" stop-color="#be8c6a"/><stop offset="1" stop-color="#a67755"/></radialGradient><filter id="b1"><feGaussianBlur stdDeviation="1.200"/></filter><filter id="b2"><feGaussianBlur stdDeviation="2.500"/></filter><filter id="b3"><feGaussianBlur stdDeviation=".6"/></filter></defs>
<rect x="1599" y="341" width="315.5" height="562" fill="url(#pbg)"/>
<path d="M1599 816H1635Q1640 850 1640 903H1599z" fill="#b48564" filter="url(#b3)"/>
<path d="M1882 795 1915 788V903H1882Q1880 850 1882 795z" fill="#b48564" filter="url(#b3)"/>
<path d="M1709 596 1706 628 1702 634 1762 698 1816 636 1808 626 1804 592z" fill="#b98a69" filter="url(#b3)"/>
<path d="M1709 596Q1725 618 1756 623 1786 618 1804 592L1805 600Q1786 626 1756 631 1726 626 1708 604z" fill="#8f6448" opacity=".4" filter="url(#b2)"/>
<path d="M1702 633 1762 697 1816 634 1900 668 1915 676V792L1883 800Q1877 850 1874.500 903H1640.500Q1641 850 1635 819L1599 816V694Q1601 688 1607 686 1622 680.500 1640 672 1660 661.500 1676 651 1686 644 1692 640z" fill="url(#shirt)" filter="url(#b3)"/>
<path d="M1702 633 1762 697 1816 634 1824 639 1762 711 1692 642z" fill="#55303c" opacity=".45" filter="url(#b3)"/>
<path d="M1607 687Q1612 730 1632 782 1640 810 1640.500 903" stroke="#4f2c38" stroke-width="1.200" fill="none" opacity=".55" filter="url(#b3)"/>
<path d="M1694 521Q1684 514 1680 524 1679 538 1684 550 1688 562 1695 560z" fill="#b5815f" filter="url(#b3)"/>
<path d="M1813 517Q1824 510 1828 521 1828 536 1823 548 1819 560 1812 557z" fill="#b5815f" filter="url(#b3)"/>
<path d="M1694 500Q1693 535 1695 552 1698 578 1710 600 1724 616 1746 622.500 1756 624 1764 622.500 1786 614 1800 592 1809 568 1813 540 1816 515 1812 490L1800 470 1710 472z" fill="url(#skin)" filter="url(#b3)"/>
<path d="M1697 560Q1706 596 1728 614 1748 624 1764 622 1788 610 1802 584 1808 570 1810 556 1796 590 1772 604 1752 610 1732 604 1708 590 1697 560z" fill="#94674a" opacity=".32" filter="url(#b2)"/>
<ellipse cx="1712" cy="556" rx="9" ry="14" fill="#cf9d7b" opacity=".5" filter="url(#b2)"/><ellipse cx="1796" cy="554" rx="9" ry="14" fill="#cf9d7b" opacity=".5" filter="url(#b2)"/>
<clipPath id="hc"><path d="M1677 432.500Q1682 428 1690 425 1696 420.500 1703 420 1716 415 1728 414.500 1742 411 1756 411 1770 408.500 1781 409 1790 408.500 1796 412 1803 417 1808 426 1815 434 1820 446 1825 456 1826.500 468 1828 480 1824.500 492 1821 506 1814 521 1812 510 1809 503 1804 488 1798 474 1780 475 1750 476 1722 476 1706 481 1700 494 1696 512L1693 526Q1690 518 1687 510 1681 490 1678 470 1674.500 448 1677 432.500z"/></clipPath>
<path d="M1677 432.500Q1682 428 1690 425 1696 420.500 1703 420 1716 415 1728 414.500 1742 411 1756 411 1770 408.500 1781 409 1790 408.500 1796 412 1803 417 1808 426 1815 434 1820 446 1825 456 1826.500 468 1828 480 1824.500 492 1821 506 1814 521 1812 510 1809 503 1804 488 1798 474 1780 475 1750 476 1722 476 1706 481 1700 494 1696 512L1693 526Q1690 518 1687 510 1681 490 1678 470 1674.500 448 1677 432.500z" fill="#382c25" filter="url(#b3)"/>
<g clip-path="url(#hc)" filter="url(#b3)"><path d="M1728.2 472.1Q1726.5 455.4 1755.1 441.6" stroke="#241b16" stroke-width="3.0" opacity="0.58" fill="none"/><path d="M1715.3 471.2Q1713.7 451.3 1736.2 435.0" stroke="#5a483c" stroke-width="1.3" opacity="0.68" fill="none"/><path d="M1716.3 478.8Q1713.5 452.6 1751.0 431.2" stroke="#4d3d33" stroke-width="2.9" opacity="0.37" fill="none"/><path d="M1724.2 472.0Q1724.7 450.9 1737.2 433.5" stroke="#4d3d33" stroke-width="2.3" opacity="0.39" fill="none"/><path d="M1712.2 471.4Q1711.1 445.4 1740.7 424.2" stroke="#2b211b" stroke-width="1.9" opacity="0.62" fill="none"/><path d="M1727.1 478.2Q1727.4 457.2 1748.9 440.0" stroke="#1f1712" stroke-width="1.2" opacity="0.66" fill="none"/><path d="M1725.4 476.9Q1724.3 453.1 1744.4 433.7" stroke="#5a483c" stroke-width="1.9" opacity="0.40" fill="none"/><path d="M1779.3 472.1Q1778.7 456.0 1802.1 442.8" stroke="#64513f" stroke-width="2.9" opacity="0.58" fill="none"/><path d="M1727.0 479.7Q1724.7 453.5 1752.5 432.0" stroke="#5a483c" stroke-width="2.0" opacity="0.73" fill="none"/><path d="M1768.4 470.8Q1770.3 443.3 1796.6 420.8" stroke="#2b211b" stroke-width="1.8" opacity="0.46" fill="none"/><path d="M1768.9 470.3Q1763.8 451.8 1790.9 436.6" stroke="#5a483c" stroke-width="1.6" opacity="0.44" fill="none"/><path d="M1777.1 475.6Q1772.5 450.9 1811.0 430.7" stroke="#2b211b" stroke-width="2.9" opacity="0.57" fill="none"/><path d="M1786.7 482.1Q1783.5 458.9 1803.9 440.0" stroke="#2b211b" stroke-width="1.3" opacity="0.73" fill="none"/><path d="M1710.8 473.2Q1709.5 448.8 1726.9 428.8" stroke="#241b16" stroke-width="1.3" opacity="0.46" fill="none"/><path d="M1753.1 478.5Q1754.0 460.8 1771.4 446.3" stroke="#64513f" stroke-width="2.6" opacity="0.61" fill="none"/><path d="M1743.9 482.2Q1742.4 454.1 1778.6 431.1" stroke="#2b211b" stroke-width="1.2" opacity="0.51" fill="none"/><path d="M1764.8 470.9Q1760.1 451.6 1776.6 435.8" stroke="#241b16" stroke-width="1.2" opacity="0.59" fill="none"/><path d="M1756.9 477.5Q1751.4 450.6 1791.6 428.6" stroke="#4d3d33" stroke-width="1.3" opacity="0.60" fill="none"/><path d="M1719.8 474.9Q1720.6 457.2 1739.2 442.7" stroke="#2b211b" stroke-width="1.7" opacity="0.54" fill="none"/><path d="M1707.0 480.5Q1706.5 456.1 1736.3 436.2" stroke="#64513f" stroke-width="3.1" opacity="0.36" fill="none"/><path d="M1752.3 472.1Q1750.6 456.1 1776.5 443.1" stroke="#1f1712" stroke-width="2.5" opacity="0.70" fill="none"/><path d="M1720.8 475.1Q1719.1 445.3 1735.2 420.9" stroke="#64513f" stroke-width="1.5" opacity="0.48" fill="none"/><path d="M1785.8 483.8Q1786.3 453.3 1817.9 428.4" stroke="#1f1712" stroke-width="1.4" opacity="0.67" fill="none"/><path d="M1748.1 480.2Q1745.9 450.1 1783.9 425.4" stroke="#4d3d33" stroke-width="3.1" opacity="0.63" fill="none"/><path d="M1742.8 483.1Q1739.7 449.9 1778.5 422.6" stroke="#4d3d33" stroke-width="2.0" opacity="0.39" fill="none"/><path d="M1729.9 476.8Q1723.9 449.9 1765.5 428.0" stroke="#1f1712" stroke-width="2.4" opacity="0.49" fill="none"/><path d="M1788.5 471.7Q1784.1 443.0 1808.6 419.5" stroke="#4d3d33" stroke-width="2.4" opacity="0.52" fill="none"/><path d="M1700.2 483.2Q1700.2 459.2 1729.0 439.5" stroke="#5a483c" stroke-width="1.4" opacity="0.64" fill="none"/><path d="M1705.0 472.1Q1700.2 441.6 1738.5 416.7" stroke="#64513f" stroke-width="2.4" opacity="0.74" fill="none"/><path d="M1731.3 477.7Q1733.1 462.0 1744.8 449.2" stroke="#1f1712" stroke-width="2.6" opacity="0.39" fill="none"/><path d="M1706.4 483.8Q1700.7 452.1 1721.5 426.1" stroke="#4d3d33" stroke-width="1.5" opacity="0.47" fill="none"/><path d="M1759.2 473.6Q1760.5 455.8 1780.1 441.2" stroke="#241b16" stroke-width="2.5" opacity="0.71" fill="none"/><path d="M1786.2 477.2Q1781.2 445.4 1817.7 419.4" stroke="#4d3d33" stroke-width="1.0" opacity="0.56" fill="none"/><path d="M1741.9 472.6Q1737.3 442.2 1752.0 417.4" stroke="#2b211b" stroke-width="1.3" opacity="0.60" fill="none"/><path d="M1697.3 479.6Q1697.5 455.1 1721.1 435.1" stroke="#64513f" stroke-width="1.4" opacity="0.37" fill="none"/><path d="M1695.0 471.4Q1696.1 455.4 1716.7 442.4" stroke="#5a483c" stroke-width="2.3" opacity="0.53" fill="none"/><path d="M1749.7 477.2Q1747.9 453.3 1777.7 433.8" stroke="#2b211b" stroke-width="1.5" opacity="0.55" fill="none"/><path d="M1751.7 482.3Q1752.9 449.6 1785.9 422.9" stroke="#4d3d33" stroke-width="1.3" opacity="0.69" fill="none"/><path d="M1704.4 476.2Q1698.9 456.3 1716.2 440.0" stroke="#1f1712" stroke-width="1.3" opacity="0.47" fill="none"/><path d="M1781.7 483.2Q1777.7 460.9 1808.4 442.7" stroke="#4d3d33" stroke-width="1.5" opacity="0.74" fill="none"/><path d="M1802.4 475.6Q1803.1 441.7 1825.1 413.9" stroke="#4d3d33" stroke-width="3.2" opacity="0.63" fill="none"/><path d="M1737.6 475.9Q1734.6 458.8 1756.9 444.8" stroke="#241b16" stroke-width="2.0" opacity="0.57" fill="none"/><path d="M1692.1 474.6Q1686.6 449.7 1718.4 429.2" stroke="#4d3d33" stroke-width="1.2" opacity="0.74" fill="none"/><path d="M1721.3 470.6Q1716.4 450.1 1751.6 433.4" stroke="#2b211b" stroke-width="2.5" opacity="0.69" fill="none"/><path d="M1801.6 475.7Q1799.6 450.7 1825.6 430.2" stroke="#241b16" stroke-width="1.1" opacity="0.39" fill="none"/><path d="M1771.2 476.0Q1770.3 443.0 1783.1 416.1" stroke="#241b16" stroke-width="2.9" opacity="0.38" fill="none"/><path d="M1683.7 442.4q2 25 8 60" stroke="#5a483c" stroke-width="1.400" opacity=".5" fill="none"/><path d="M1823.9 448.4q-2 25 -8 60" stroke="#2b211b" stroke-width="1.400" opacity=".5" fill="none"/><path d="M1680.6 454.2q2 25 8 60" stroke="#5a483c" stroke-width="1.400" opacity=".5" fill="none"/><path d="M1683.7 443.6q2 25 8 60" stroke="#2b211b" stroke-width="1.400" opacity=".5" fill="none"/><path d="M1815.6 444.1q-2 25 -8 60" stroke="#4d3d33" stroke-width="1.400" opacity=".5" fill="none"/><path d="M1683.8 456.1q2 25 8 60" stroke="#2b211b" stroke-width="1.400" opacity=".5" fill="none"/><path d="M1680.2 454.7q2 25 8 60" stroke="#241b16" stroke-width="1.400" opacity=".5" fill="none"/><path d="M1810.4 448.9q-2 25 -8 60" stroke="#4d3d33" stroke-width="1.400" opacity=".5" fill="none"/><path d="M1815.8 457.8q-2 25 -8 60" stroke="#2b211b" stroke-width="1.400" opacity=".5" fill="none"/><path d="M1693.8 446.9q2 25 8 60" stroke="#241b16" stroke-width="1.400" opacity=".5" fill="none"/><path d="M1823.8 459.6q-2 25 -8 60" stroke="#241b16" stroke-width="1.400" opacity=".5" fill="none"/><path d="M1681.0 454.8q2 25 8 60" stroke="#2b211b" stroke-width="1.400" opacity=".5" fill="none"/><path d="M1808.9 441.7q-2 25 -8 60" stroke="#4d3d33" stroke-width="1.400" opacity=".5" fill="none"/><path d="M1816.8 453.9q-2 25 -8 60" stroke="#5a483c" stroke-width="1.400" opacity=".5" fill="none"/></g>
<path d="M1705 514Q1720 508.500 1738 513M1769 512Q1786 506.500 1802 511" stroke="#4a3426" stroke-width="2.400" fill="none" filter="url(#b3)" stroke-linecap="round" opacity=".85"/>
<ellipse cx="1727" cy="525.500" rx="7.500" ry="2.800" fill="#d8c2b2"/><ellipse cx="1781" cy="524" rx="7.500" ry="2.800" fill="#d8c2b2"/>
<circle cx="1727.500" cy="525.300" r="3" fill="#45281a"/><circle cx="1781" cy="523.800" r="3" fill="#45281a"/>
<path d="M1718 524.500Q1727 520.500 1737 525.500M1771 524Q1781 519.500 1791 524" stroke="#5a3d2d" stroke-width="1.100" fill="none"/>
<path d="M1734 584.500Q1745 578 1755 580.500 1765 578 1776 584 1768 592.500 1755 593.500 1743 593 1734 584.500z" fill="#bd8285" filter="url(#b3)"/>
<path d="M1735 584.800Q1755 587.500 1776 584.300" stroke="#8f5658" stroke-width="1" fill="none" filter="url(#b3)"/>
<path d="M1729.600 531 1777 530 1777.600 577 1730.500 578z" fill="#55565f"/>
</svg>
<div class="abs" style="left:1766px;top:628px;width:140px;height:16px;background:#000"></div>
<div class="t" style="left:1771px;top:629px;font-size:11.500px;color:#fff;letter-spacing:0;line-height:14px">ML Face Occlusion Mask</div>
<div class="abs" style="left:1770px;top:646px;width:131px;height:233px;background:#000"></div>
<svg style="left:1770px;top:646px;overflow:hidden" width="131" height="233" viewBox="1770 646 131 233"><defs><filter id="mb"><feGaussianBlur stdDeviation="1.100"/></filter><filter id="mb2" x="-20%" y="-100%" width="140%" height="300%"><feGaussianBlur stdDeviation="2.200"/></filter></defs><path d="M1814.500 705Q1815.500 702.500 1820 702L1828 700.500 1835 699 1851 699.500Q1854 700 1854.500 706L1855 712 1858 718 1862 716.500Q1865.500 718 1864.800 722 1864 728 1858.500 735L1856.500 744 1855.600 769H1815L1814.800 751.500Q1813 745 1807 735.500 1802 728 1802.500 725.500 1805 722 1808 721.500 1811 718 1813 708z" fill="#fff" filter="url(#mb)"/><rect x="1806" y="765" width="60" height="12" fill="#000" filter="url(#mb2)"/></svg>
<div class="abs" style="left:1599px;top:1171px;width:316px;height:23px;background:#2d313b"></div>
<svg style="left:1608px;top:1176px" width="18" height="14" viewBox="0 0 18 14" fill="#dfe5ec"><path d="M1 4.500h3.500L9.500 1v12L4.500 9.500H1z" stroke="#dfe5ec" stroke-width="1" stroke-linejoin="round"/><rect x="11.800" y="4.500" width="1.500" height="5"/><rect x="15" y="2.500" width="1.600" height="9"/></svg>
<svg style="left:1633px;top:1175px" width="16" height="16" viewBox="0 0 16 16" fill="none" stroke="#e8ebef" stroke-width="1.900"><circle cx="8" cy="8" r="6.800"/><path d="M6.200 4.800v6.400M9.800 4.800v6.400" stroke-width="1.700" stroke-linecap="round"/></svg>
<div class="t" style="left:1729.800px;top:1175.600px;font-size:13px;line-height:16px;letter-spacing:.18px">iPhone 8</div>
<svg style="left:1785.5px;top:1180.5px" width="9" height="6.0" viewBox="0 0 9 6" fill="none" stroke="#e8ebef" stroke-width="1.700" stroke-linecap="round" stroke-linejoin="round"><path d="M1 1.200 4.500 4.800 8 1.200"/></svg>
<svg style="left:1864.500px;top:1177px" width="17" height="12" viewBox="0 0 17 12" fill="#dfe5ec"><rect x="0" y=".5" width="11.500" height="11" rx="3"/><path d="M12.500 4 16 1.500q1-.5 1 .5v8q0 1-1 .5L12.500 8z"/></svg>
<svg style="left:1889px;top:1175px" width="16" height="16" viewBox="0 0 16 16" fill="none" stroke="#e8ebef" stroke-width="1.700"><path d="M3.500 0v12.500H16M0 3.500h12.500V16"/><path d="M6 6.500h4v4" stroke-width="1.200"/></svg>
</body></html>
